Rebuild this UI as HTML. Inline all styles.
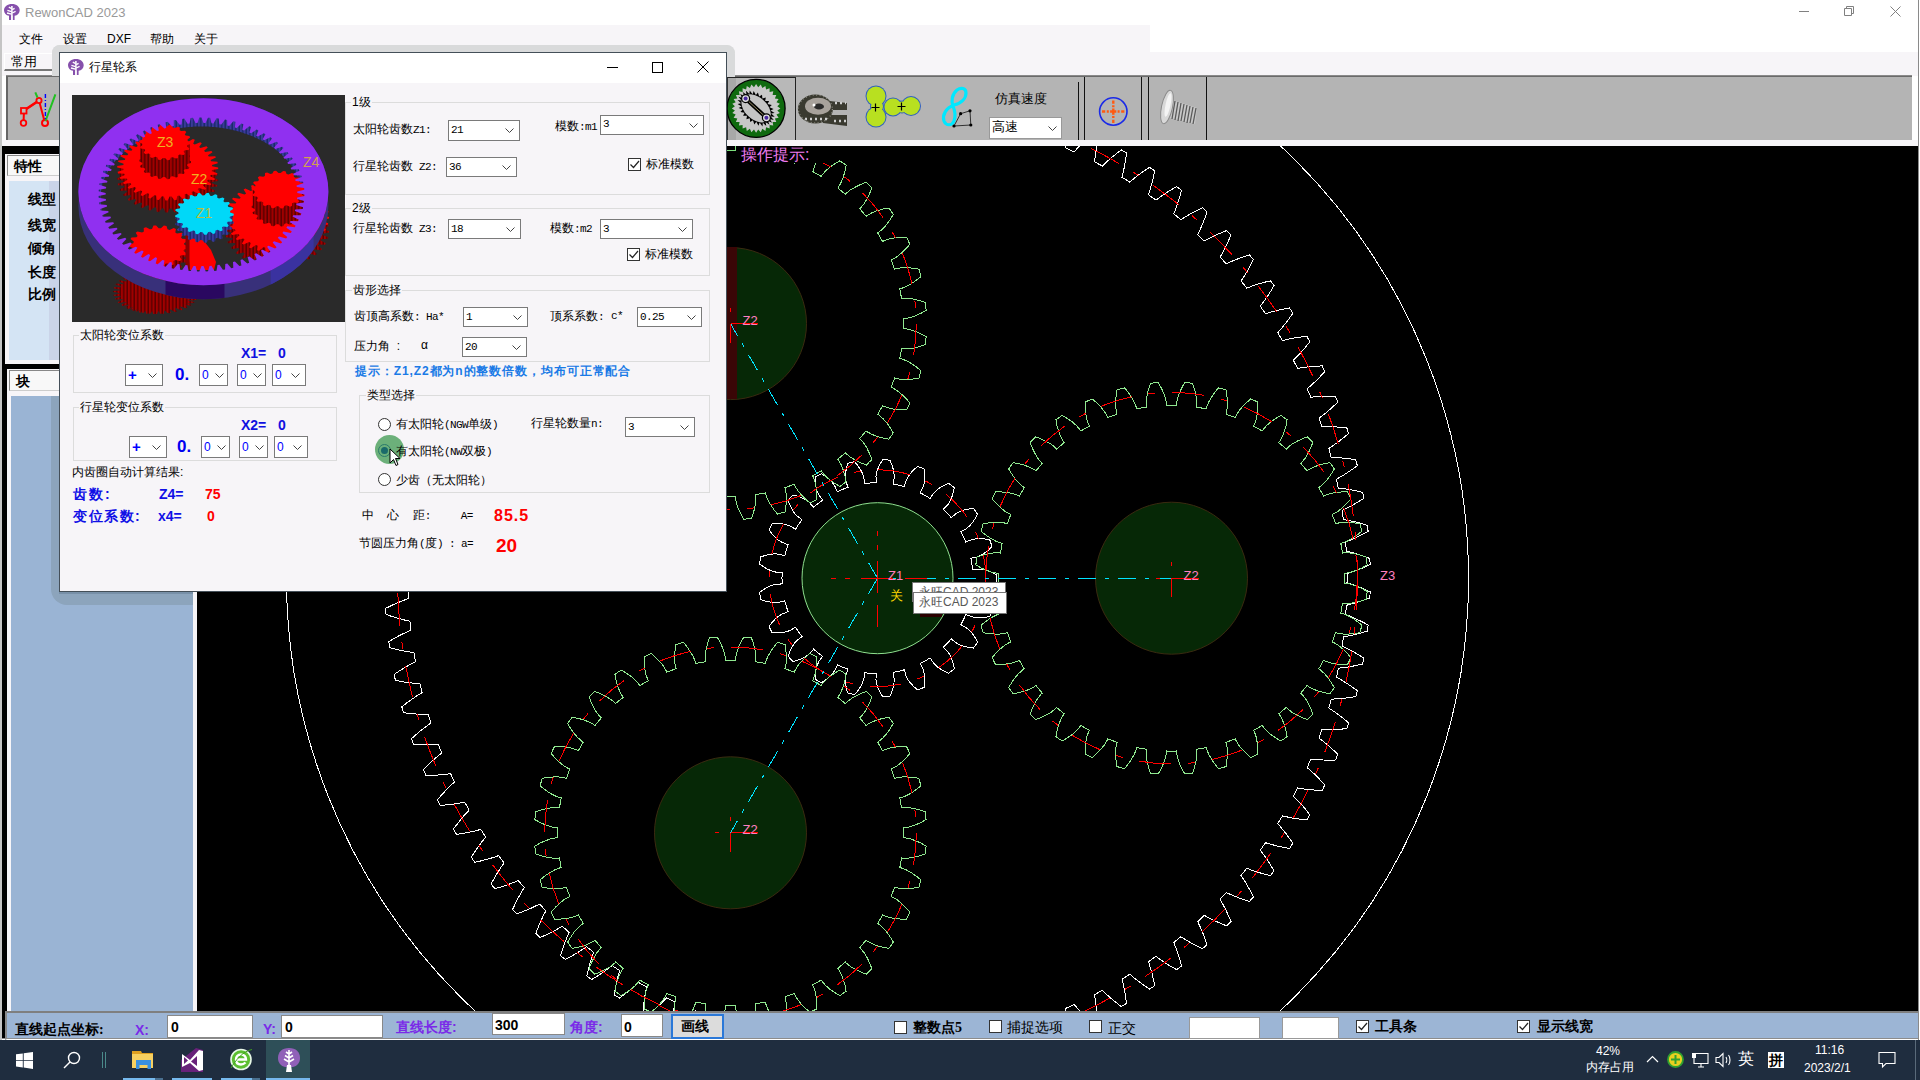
<!DOCTYPE html>
<html><head><meta charset="utf-8">
<style>
*{box-sizing:border-box;margin:0;padding:0}
html,body{width:1920px;height:1080px;overflow:hidden;background:#fff;font-family:"Liberation Sans",sans-serif;font-size:12px;color:#000}
.a{position:absolute;white-space:nowrap}
.t{position:absolute;white-space:nowrap;line-height:1}
.cb{position:absolute;background:#fff;border:1px solid #7a7a7a}
.cb .v{position:absolute;left:2px;top:2px;font-family:"Liberation Mono",monospace;font-size:11px;letter-spacing:-0.6px;line-height:14px}
.cb svg{position:absolute;right:5px;top:7px}
.chk{position:absolute;width:13px;height:13px;border:1px solid #333;background:#fff}
.grp{position:absolute;border:1px solid #dcdcdc}
.m{font-family:"Liberation Mono",monospace;font-size:11px;letter-spacing:-0.6px}
.lbl{position:absolute;background:#f7f5f8;padding:0 1px;line-height:14px;white-space:nowrap}
</style></head>
<body>
<!-- title bar -->
<div class="a" style="left:0;top:0;width:1920px;height:25px;background:#fff"></div>
<div class="a" style="left:0;top:0;width:2px;height:1040px;background:#c4c4c4"></div>
<div class="a" style="left:1918px;top:0;width:1px;height:1040px;background:#8a8a8a"></div>
<!-- MENUBAR -->
<div class="a" style="left:2px;top:25px;width:1148px;height:27px;background:#f7f5f8"></div>
<div class="a" style="left:2px;top:52px;width:1916px;height:24px;background:#f7f5f8"></div>
<svg class="a" style="left:4px;top:4px" width="16" height="17" viewBox="0 0 16 17"><path d="M8 0C12.5 0 15.7 2.6 15.7 6.2 15.7 9.3 13.5 11.2 10.6 11.8V16H8.6V11.5H7.4V16H5V11.8C2.2 11.2 0 9.3 0 6.2 0 2.6 3.5 0 8 0Z" fill="#8650ac"/><path d="M7.9 2V16" stroke="#fff" stroke-width="1.5"/><path d="M7.6 4.6L4.8 3.2M7.6 7.6L3.4 6.3M7.6 10.2L3 9M8.2 5.6L10.6 4.4M8.2 9L11.6 7.4" stroke="#fff" stroke-width="1.3"/></svg>
<div class="t" style="left:25px;top:6px;font-size:13px;color:#999">RewonCAD 2023</div>
<div class="a" style="left:1799px;top:11px;width:10px;height:1px;background:#808080"></div>
<svg class="a" style="left:1843px;top:5px" width="12" height="12"><path d="M1.5 3.5h7v7h-7z M3.5 3.5v-2h7v7h-2" stroke="#808080" fill="none"/></svg>
<svg class="a" style="left:1890px;top:6px" width="11" height="11"><path d="M0.5 0.5L10.5 10.5M10.5 0.5L0.5 10.5" stroke="#808080"/></svg>
<div class="t" style="left:19px;top:33px;font-size:12px">文件</div>
<div class="t" style="left:63px;top:33px;font-size:12px">设置</div>
<div class="t" style="left:107px;top:33px;font-size:12px">DXF</div>
<div class="t" style="left:150px;top:33px;font-size:12px">帮助</div>
<div class="t" style="left:194px;top:33px;font-size:12px">关于</div>
<!-- tab 常用 -->
<div class="a" style="left:4px;top:53px;width:54px;height:18px;background:#f7f5f8;border-left:1px solid #fff;border-top:1px solid #fff;border-right:2px solid #777;border-bottom:2px solid #777"></div>
<div class="t" style="left:11px;top:55px;font-size:13px">常用</div>
<!-- TOOLBAR -->
<div class="a" style="left:6px;top:75px;width:1906px;height:65px;background:#b4b4b4;border-top:2px solid #6a6a6a;border-left:2px solid #666"></div>
<div class="a" style="left:6px;top:75px;width:1906px;height:1px;background:#8a8a8a"></div>
<div class="a" style="left:2px;top:140px;width:1916px;height:6px;background:#f7f5f8"></div>
<svg class="a" style="left:16px;top:90px" width="42" height="40"><path d="M7.5 33L8 20.5L23 10.5L29 33" stroke="#f00" stroke-width="2" fill="none"/><path d="M8 20.5L23 10.5" stroke="#f00" stroke-width="2.6"/><rect x="5" y="18" width="5.5" height="5.5" fill="#bbb" stroke="#f00" stroke-width="1.8"/><circle cx="23" cy="10.5" r="2.6" fill="#bbb" stroke="#f00" stroke-width="1.8"/><circle cx="7.5" cy="33" r="2.8" fill="#bbb" stroke="#f00" stroke-width="1.8"/><circle cx="29" cy="33" r="3" fill="#bbb" stroke="#f00" stroke-width="2"/><path d="M21.5 7.5L19.3 2.4M29.5 31L39.4 4.3" stroke="#20c020" stroke-width="2"/><path d="M29.4 4V31" stroke="#00f" stroke-width="1.4" stroke-dasharray="4 2 1 2"/></svg>
<!-- toolbar right icons -->
<div class="a" style="left:727px;top:77px;width:69px;height:63px;border-left:1px solid #333;border-right:1px solid #222;border-top:1px solid #222;background:#b8b8b8"></div><div class="a" style="left:728px;top:78px;width:8px;height:62px;background:#a8a8a8"></div>
<svg class="a" style="left:725px;top:78px" width="62" height="62"><circle cx="31.1" cy="30.4" r="29" fill="#0f6a0f" stroke="#000" stroke-width="1.3"/><polygon points="55.4,30.4 52.3,32.5 54.9,35.1 51.5,36.6 53.6,39.7 49.9,40.4 51.3,43.9 47.6,43.9 48.3,47.6 44.6,46.9 44.6,50.6 41.1,49.2 40.4,52.9 37.3,50.8 35.8,54.2 33.2,51.6 31.1,54.7 29.0,51.6 26.4,54.2 24.9,50.8 21.8,52.9 21.1,49.2 17.6,50.6 17.6,46.9 13.9,47.6 14.6,43.9 10.9,43.9 12.3,40.4 8.6,39.7 10.7,36.6 7.3,35.1 9.9,32.5 6.8,30.4 9.9,28.3 7.3,25.7 10.7,24.2 8.6,21.1 12.3,20.4 10.9,16.9 14.6,16.9 13.9,13.2 17.6,13.9 17.6,10.2 21.1,11.6 21.8,7.9 24.9,10.0 26.4,6.6 29.0,9.2 31.1,6.1 33.2,9.2 35.8,6.6 37.3,10.0 40.4,7.9 41.1,11.6 44.6,10.2 44.6,13.9 48.3,13.2 47.6,16.9 51.3,16.9 49.9,20.4 53.6,21.1 51.5,24.2 54.9,25.7 52.3,28.3" fill="#c8c8c8"/><polygon points="47.1,44.8 42.9,42.8 44.5,46.8 40.6,44.1 41.3,48.0 37.8,44.7 37.5,48.4 34.6,44.6 33.5,47.8 31.3,43.8 29.3,46.4 28.0,42.3 25.2,44.1 24.8,40.3 21.4,41.2 22.0,37.7 18.1,37.7 19.6,34.7 15.4,33.9 17.7,31.6 13.6,29.9 16.6,28.4 12.6,25.9 16.1,25.2 12.5,22.1 16.5,22.4 13.4,18.8 17.5,19.9 15.1,16.0 19.3,18.0 17.7,14.0 21.6,16.7 20.9,12.8 24.4,16.1 24.7,12.4 27.6,16.2 28.7,13.0 30.9,17.0 32.9,14.4 34.2,18.5 37.0,16.7 37.4,20.5 40.8,19.6 40.2,23.1 44.1,23.1 42.6,26.1 46.8,26.9 44.5,29.2 48.6,30.9 45.6,32.4 49.6,34.9 46.1,35.6 49.7,38.7 45.7,38.4 48.8,42.0 44.7,40.9" fill="#000"/><ellipse cx="31.1" cy="30.4" rx="17" ry="11" transform="rotate(42 31.1 30.4)" fill="#c4c4c4"/><path d="M20.6 20.6L41.4 39.8" stroke="#000" stroke-width="4"/><path d="M21 21L41 39.4" stroke="#d8c890" stroke-width=".7"/><circle cx="20.6" cy="20.6" r="4" fill="#ddd" stroke="#000" stroke-width="1.2"/><circle cx="20.6" cy="20.6" r="2" fill="#4a2aa0"/><circle cx="41.4" cy="39.8" r="4" fill="#ddd" stroke="#000" stroke-width="1.2"/><circle cx="41.4" cy="39.8" r="2" fill="#4a2aa0"/></svg>
<svg class="a" style="left:797px;top:93px" width="52" height="36"><ellipse cx="18.4" cy="16" rx="17.5" ry="14.5" fill="#3a3a30"/><path d="M24 7L50 10V17L34 17L34 22L50 22V33L26 30Z" fill="#3a3a30"/><ellipse cx="21" cy="13.3" rx="13" ry="8.5" fill="#a8a29c"/><ellipse cx="22" cy="13.5" rx="5" ry="3" fill="#2a2a2a"/><circle cx="17" cy="12" r="1.5" fill="#fff"/><path d="M38 10h11M37 28h12M8 26h24" stroke="#cfcfcf" stroke-width="2.5" stroke-dasharray="2 3"/><ellipse cx="18.4" cy="16" rx="17" ry="14" fill="none" stroke="#8a8a80" stroke-width="1.3" stroke-dasharray="1 2.5"/></svg>
<svg class="a" style="left:860px;top:82px" width="66" height="50"><circle cx="16.0" cy="14.0" r="10.5" fill="#3060c0"/><circle cx="16.0" cy="35.0" r="10.5" fill="#3060c0"/><circle cx="17.0" cy="24.5" r="7.0" fill="#3060c0"/><circle cx="33.0" cy="25.0" r="9.5" fill="#3060c0"/><circle cx="51.0" cy="24.0" r="10.0" fill="#3060c0"/><circle cx="42.0" cy="25.0" r="6.5" fill="#3060c0"/><circle cx="16.0" cy="14.0" r="9.5" fill="#b8e020"/><circle cx="16.0" cy="35.0" r="9.5" fill="#b8e020"/><circle cx="17.0" cy="24.5" r="6.0" fill="#b8e020"/><circle cx="33.0" cy="25.0" r="8.5" fill="#b8e020"/><circle cx="51.0" cy="24.0" r="9.0" fill="#b8e020"/><circle cx="42.0" cy="25.0" r="5.5" fill="#b8e020"/><path d="M11.5 25.5h8M15.5 21.5v8M37.5 24.5h8M41.5 20.5v8" stroke="#000" stroke-width="1.2"/></svg>
<svg class="a" style="left:932px;top:84px" width="44" height="46"><path d="M22 21c-8 3-12 10-10 16 2 5 8 5 10 0 2-5 1-10-1-15-2-5-1-12 4-16 4-3 9-2 9 3 0 5-4 10-12 12z" fill="none" stroke="#00e8ff" stroke-width="3.2"/><path d="M22 42L28.6 29.7L38 26.8L38.8 41Z" fill="none" stroke="#222" stroke-width=".9"/><circle cx="22" cy="42" r="1.6"/><circle cx="28.6" cy="29.7" r="1.6"/><circle cx="38" cy="26.8" r="1.6"/><circle cx="38.8" cy="41" r="1.6"/></svg>
<div class="t" style="left:995px;top:92px;font-size:13px">仿真速度</div>
<div class="a" style="left:989px;top:117px;width:73px;height:22px;background:#fff;border:1px solid #999"></div>
<div class="t" style="left:992px;top:120px;font-size:13px">高速</div>
<svg class="a" style="left:1048px;top:126px" width="9" height="5"><path d="M0.5 0.5L4.5 4.5L8.5 0.5" stroke="#444" fill="none"/></svg>
<div class="a" style="left:1078px;top:82px;width:1px;height:58px;background:#111"></div>
<div class="a" style="left:1084px;top:77px;width:1px;height:63px;background:#111"></div>
<svg class="a" style="left:1098px;top:96px" width="30" height="32"><circle cx="15.3" cy="15.5" r="13.7" fill="none" stroke="#1a2ae8" stroke-width="1.6"/><path d="M15.3 4.5v22.5M4 15.5h22.5" stroke="#ff5a10" stroke-width="2.4" stroke-dasharray="3.2 1.6 2 1.3 6.2 1.3 2 1.6 3.2"/></svg>
<div class="a" style="left:1141px;top:77px;width:1px;height:63px;background:#111"></div>
<div class="a" style="left:1148px;top:77px;width:1px;height:63px;background:#111"></div>
<svg class="a" style="left:1156px;top:86px" width="44" height="42"><path d="M16 14L41 22L39 38L14 32Z" fill="#c8c8c8"/><path d="M19 15L16 33M22 16L19 34M25 17L22 35M28 18L25 35M31 19L28 36M34 20L31 37M37 21L34 37M40 22L37 38" stroke="#5a5a5a" stroke-width="1.3"/><ellipse cx="11" cy="21" rx="5.5" ry="17" transform="rotate(12 11 21)" fill="#d8d8d8" stroke="#8a8a8a" stroke-width="1"/><ellipse cx="12" cy="19" rx="2.5" ry="12" transform="rotate(12 12 19)" fill="#f4f4f4"/></svg>
<div class="a" style="left:1206px;top:77px;width:1px;height:63px;background:#111"></div>
<!-- LEFTPANEL -->
<div class="a" style="left:2px;top:146px;width:195px;height:865px;background:#000"></div>
<div class="a" style="left:5px;top:154px;width:192px;height:210px;background:#f7f5f8"></div>
<div class="a" style="left:7px;top:155px;width:52px;height:21px;background:#f8f8f8;border-left:1px solid #888;border-top:1px solid #888;border-bottom:1px solid #ccc"></div>
<div class="t" style="left:14px;top:160px;font-size:14px;font-weight:bold;font-family:'Liberation Serif',serif">特性</div>
<div class="a" style="left:9px;top:181px;width:184px;height:179px;background:#d4e4f4"></div>
<div class="a" style="left:49px;top:181px;width:10px;height:179px;background:#cad4e8"></div>
<div class="t" style="left:28px;top:193px;font-size:14px;font-weight:bold;font-family:'Liberation Serif',serif">线型</div>
<div class="t" style="left:28px;top:219px;font-size:14px;font-weight:bold;font-family:'Liberation Serif',serif">线宽</div>
<div class="t" style="left:28px;top:242px;font-size:14px;font-weight:bold;font-family:'Liberation Serif',serif">倾角</div>
<div class="t" style="left:28px;top:266px;font-size:14px;font-weight:bold;font-family:'Liberation Serif',serif">长度</div>
<div class="t" style="left:28px;top:288px;font-size:14px;font-weight:bold;font-family:'Liberation Serif',serif">比例</div>
<div class="a" style="left:7px;top:369px;width:190px;height:642px;background:#f7f5f8"></div>
<div class="a" style="left:9px;top:370px;width:50px;height:21px;background:#f8f8f8;border-left:1px solid #888;border-top:1px solid #888;border-bottom:1px solid #ccc"></div>
<div class="t" style="left:16px;top:375px;font-size:14px;font-weight:bold;font-family:'Liberation Serif',serif">块</div>
<div class="a" style="left:11px;top:396px;width:182px;height:615px;background:#9ab4d4"></div>
<div class="a" style="left:51px;top:396px;width:142px;height:209px;background:#8ca4bc;border-bottom-left-radius:16px"></div>
<div class="a" style="left:59px;top:591px;width:134px;height:3px;background:#7890a8"></div>
<!-- CANVAS -->
<div class="a" style="left:197px;top:146px;width:1721px;height:865px;background:#000;overflow:hidden">
<svg width="1721" height="865" style="position:absolute;left:0;top:0" font-family="Liberation Sans, sans-serif">
<circle cx="680.5" cy="432.2" r="591" fill="none" stroke="#fff" stroke-width="1" shape-rendering="crispEdges"/>
<circle cx="680.5" cy="432.2" r="75.5" fill="#062806" stroke="#8ee08e" stroke-width="1"/>
<circle cx="974.5" cy="432.2" r="76" fill="#062806" stroke="#3a2a10" stroke-width="1"/>
<circle cx="533.5" cy="177.6" r="76" fill="#062806" stroke="#3a2a10" stroke-width="1"/>
<circle cx="533.5" cy="686.8" r="76" fill="#062806" stroke="#3a2a10" stroke-width="1"/>
<rect x="530.0" y="101.0" width="10" height="152" fill="#3a0606"/>
<path d="M1150.1,432.2 L1150.0,427.6 L1150.0,427.6 L1155.8,425.7 L1161.6,423.6 L1167.4,421.2 L1173.1,418.6 L1173.0,415.6 L1172.9,412.5 L1167.0,410.3 L1161.1,408.3 L1155.2,406.6 L1149.3,405.1 L1149.3,405.1 L1149.0,400.5 L1148.7,395.9 L1148.7,395.9 L1154.3,393.7 L1159.9,391.1 L1165.5,388.4 L1171.1,385.4 L1170.8,382.3 L1170.4,379.3 L1164.4,377.5 L1158.4,375.9 L1152.4,374.6 L1146.4,373.5 L1146.4,373.5 L1145.8,368.9 L1145.1,364.4 L1145.1,364.4 L1150.6,361.8 L1156.0,358.9 L1161.4,355.7 L1166.8,352.4 L1166.3,349.4 L1165.7,346.4 L1159.6,345.0 L1153.5,343.8 L1147.4,342.8 L1141.3,342.2 L1141.3,342.2 L1140.4,337.7 L1139.5,333.2 L1139.5,333.2 L1144.8,330.2 L1150.0,326.9 L1155.2,323.4 L1160.3,319.7 L1159.6,316.8 L1158.8,313.8 L1152.6,312.8 L1146.4,312.1 L1140.3,311.5 L1134.2,311.3 L1134.2,311.3 L1133.0,306.8 L1131.8,302.4 L1131.8,302.4 L1136.8,299.1 L1141.8,295.5 L1146.7,291.6 L1151.6,287.6 L1150.7,284.7 L1149.8,281.8 L1143.5,281.2 L1137.3,280.9 L1131.1,280.8 L1125.0,280.9 L1125.0,280.9 L1123.5,276.6 L1122.0,272.3 L1122.0,272.3 L1126.8,268.6 L1131.6,264.6 L1136.2,260.5 L1140.7,256.1 L1139.6,253.3 L1138.5,250.4 L1132.2,250.3 L1126.0,250.4 L1119.8,250.7 L1113.8,251.2 L1113.8,251.2 L1112.0,247.0 L1110.2,242.8 L1110.2,242.8 L1114.8,238.8 L1119.2,234.6 L1123.6,230.1 L1127.8,225.5 L1126.5,222.7 L1125.2,219.9 L1118.9,220.2 L1112.7,220.7 L1106.6,221.4 L1100.6,222.4 L1100.6,222.4 L1098.5,218.3 L1096.4,214.3 L1096.4,214.3 L1100.7,209.9 L1104.9,205.4 L1108.9,200.7 L1112.8,195.7 L1111.4,193.1 L1109.9,190.4 L1103.6,191.1 L1097.4,192.0 L1091.4,193.2 L1085.5,194.5 L1085.5,194.5 L1083.1,190.6 L1080.8,186.7 L1080.8,186.7 L1084.7,182.1 L1088.6,177.3 L1092.3,172.3 L1095.9,167.1 L1094.2,164.5 L1092.6,162.0 L1086.4,163.1 L1080.3,164.4 L1074.3,166.0 L1068.5,167.7 L1068.5,167.7 L1065.9,164.0 L1063.3,160.2 L1063.3,160.2 L1066.9,155.4 L1070.4,150.3 L1073.8,145.1 L1077.0,139.6 L1075.2,137.2 L1073.4,134.8 L1067.3,136.3 L1061.3,138.0 L1055.4,140.0 L1049.8,142.1 L1049.8,142.1 L1046.9,138.5 L1044.0,135.0 L1044.0,135.0 L1047.4,129.9 L1050.5,124.6 L1053.5,119.2 L1056.4,113.5 L1054.4,111.2 L1052.4,108.9 L1046.4,110.9 L1040.6,113.0 L1034.9,115.3 L1029.3,117.9 L1029.3,117.9 L1026.2,114.5 L1023.1,111.1 L1023.1,111.1 L1026.1,105.8 L1028.9,100.3 L1031.5,94.7 L1034.0,88.9 L1031.9,86.7 L1029.7,84.5 L1023.9,86.9 L1018.2,89.4 L1012.7,92.1 L1007.3,95.0 L1007.3,95.0 L1004.0,91.9 L1000.7,88.7 L1000.7,88.7 L1003.3,83.2 L1005.7,77.6 L1008.0,71.8 L1010.0,65.8 L1007.8,63.8 L1005.5,61.8 L999.8,64.5 L994.3,67.4 L988.9,70.5 L983.8,73.7 L983.8,73.7 L980.3,70.8 L976.8,67.9 L976.8,67.9 L979.0,62.2 L981.0,56.4 L982.9,50.5 L984.5,44.4 L982.1,42.5 L979.7,40.7 L974.2,43.8 L968.9,47.1 L963.8,50.5 L958.9,54.1 L958.9,54.1 L955.2,51.4 L951.5,48.7 L951.5,48.7 L953.3,42.9 L955.0,37.0 L956.4,30.9 L957.7,24.8 L955.1,23.0 L952.6,21.4 L947.3,24.8 L942.3,28.5 L937.4,32.2 L932.8,36.2 L932.8,36.2 L928.9,33.7 L925.0,31.3 L925.0,31.3 L926.4,25.4 L927.7,19.4 L928.7,13.2 L929.5,7.0 L926.9,5.4 L924.2,3.9 L919.2,7.8 L914.4,11.7 L909.8,15.8 L905.4,20.0 L905.4,20.0 L901.4,17.9 L897.4,15.7 L897.4,15.7 L898.4,9.7 L899.2,3.6 L899.9,-2.6 L900.3,-8.9 L897.5,-10.2 L894.8,-11.6 L890.0,-7.4 L885.5,-3.1 L881.2,1.3 L877.1,5.8 L877.1,5.8 L872.9,3.9 L868.7,2.0 L868.7,2.0 L869.4,-4.0 L869.8,-10.2 L870.0,-16.4 L870.0,-22.7 L867.2,-23.9 L864.3,-25.0 L859.9,-20.5 L855.7,-16.0 L851.6,-11.3 L847.9,-6.5 L847.9,-6.5 L843.6,-8.1 L839.3,-9.7 L839.3,-9.7 L839.5,-15.8 L839.5,-21.9 L839.3,-28.2 L838.8,-34.5 L835.9,-35.4 L833.0,-36.4 L828.9,-31.6 L825.0,-26.8 L821.3,-21.8 L817.9,-16.8 L817.9,-16.8 L813.5,-18.1 L809.1,-19.4 L809.1,-19.4 L808.9,-25.5 L808.5,-31.6 L807.8,-37.8 L807.0,-44.1 L804.0,-44.8 L801.1,-45.6 L797.3,-40.6 L793.7,-35.5 L790.3,-30.3 L787.2,-25.1 L787.2,-25.1 L782.8,-26.1 L778.3,-27.1 L778.3,-27.1 L777.7,-33.1 L776.9,-39.2 L775.8,-45.4 L774.5,-51.5 L771.5,-52.1 L768.5,-52.7 L765.1,-47.4 L761.9,-42.0 L758.9,-36.7 L756.1,-31.2 L756.1,-31.2 L751.6,-31.9 L747.1,-32.6 L747.1,-32.6 L746.1,-38.6 L744.8,-44.6 L743.4,-50.7 L741.7,-56.8 L738.6,-57.1 L735.6,-57.5 L732.5,-52.0 L729.7,-46.5 L727.0,-40.9 L724.7,-35.3 L724.7,-35.3 L720.1,-35.7 L715.5,-36.1 L715.5,-36.1 L714.2,-42.0 L712.5,-47.9 L710.6,-53.8 L708.5,-59.8 L705.5,-59.9 L702.4,-60.1 L699.7,-54.4 L697.2,-48.7 L695.0,-42.9 L693.0,-37.2 L693.0,-37.2 L688.4,-37.3 L683.9,-37.3 L683.9,-37.3 L682.1,-43.2 L680.0,-49.0 L677.7,-54.8 L675.2,-60.6 L672.2,-60.5 L669.1,-60.4 L666.8,-54.6 L664.7,-48.7 L662.9,-42.8 L661.3,-37.0 L661.3,-37.0 L656.7,-36.8 L652.1,-36.5 L652.1,-36.5 L650.0,-42.2 L647.5,-47.8 L644.9,-53.5 L642.0,-59.1 L638.9,-58.8 L635.9,-58.6 L634.0,-52.5 L632.3,-46.5 L630.8,-40.6 L629.7,-34.6 L629.7,-34.6 L625.1,-34.1 L620.6,-33.5 L620.6,-33.5 L618.0,-39.0 L615.2,-44.5 L612.2,-50.0 L608.9,-55.4 L605.9,-54.9 L602.9,-54.4 L601.4,-48.3 L600.1,-42.2 L599.0,-36.1 L598.3,-30.1 L598.3,-30.1 L593.8,-29.3 L589.3,-28.4 L589.3,-28.4 L586.3,-33.7 L583.2,-39.0 L579.8,-44.2 L576.1,-49.4 L573.2,-48.7 L570.2,-48.1 L569.1,-41.9 L568.2,-35.7 L567.6,-29.6 L567.2,-23.5 L567.2,-23.5 L562.8,-22.4 L558.4,-21.2 L558.4,-21.2 L555.1,-26.3 L551.6,-31.4 L547.8,-36.4 L543.9,-41.3 L540.9,-40.4 L538.0,-39.5 L537.4,-33.3 L536.9,-27.0 L536.7,-20.9 L536.7,-14.8 L536.7,-14.8 L532.4,-13.4 L528.0,-11.9 L528.0,-11.9 L524.4,-16.8 L520.6,-21.6 L516.5,-26.3 L512.2,-31.0 L509.4,-29.9 L506.5,-28.8 L506.3,-22.5 L506.2,-16.3 L506.4,-10.2 L506.9,-4.1 L506.9,-4.1 L502.6,-2.4 L498.4,-0.6 L498.4,-0.6 L494.5,-5.3 L490.3,-9.8 L485.9,-14.2 L481.3,-18.5 L478.5,-17.3 L475.8,-16.0 L476.0,-9.7 L476.4,-3.5 L477.0,2.6 L477.8,8.6 L477.8,8.6 L473.7,10.6 L469.6,12.7 L469.6,12.7 L465.4,8.3 L460.9,4.1 L456.2,-0.1 L451.4,-4.1 L448.7,-2.6 L446.0,-1.2 L446.6,5.1 L447.4,11.3 L448.4,17.3 L449.7,23.3 L449.7,23.3 L445.7,25.5 L441.8,27.9 L441.8,27.9 L437.2,23.8 L432.5,19.9 L427.6,16.1 L422.4,12.4 L419.8,14.0 L417.3,15.6 L418.3,21.8 L419.5,28.0 L421.0,33.9 L422.6,39.8 L422.6,39.8 L418.8,42.3 L415.0,44.9 L415.0,44.9 L410.2,41.1 L405.2,37.5 L400.0,34.1 L394.7,30.8 L392.2,32.6 L389.7,34.4 L391.2,40.5 L392.8,46.5 L394.7,52.4 L396.7,58.1 L396.7,58.1 L393.1,60.9 L389.5,63.7 L389.5,63.7 L384.4,60.3 L379.2,57.0 L373.8,53.9 L368.2,51.0 L365.9,52.9 L363.5,54.9 L365.4,60.9 L367.4,66.8 L369.7,72.5 L372.1,78.1 L372.1,78.1 L368.7,81.1 L365.3,84.2 L365.3,84.2 L360.0,81.1 L354.6,78.2 L349.0,75.5 L343.2,72.9 L341.0,75.0 L338.8,77.1 L341.1,83.0 L343.5,88.8 L346.1,94.3 L348.9,99.7 L348.9,99.7 L345.7,103.0 L342.5,106.3 L342.5,106.3 L337.0,103.6 L331.4,101.0 L325.6,98.7 L319.7,96.5 L317.7,98.8 L315.6,101.0 L318.3,106.7 L321.1,112.3 L324.1,117.7 L327.2,122.9 L327.2,122.9 L324.2,126.3 L321.3,129.8 L321.3,129.8 L315.6,127.5 L309.9,125.4 L303.9,123.4 L297.9,121.7 L296.0,124.0 L294.1,126.4 L297.1,131.9 L300.3,137.3 L303.6,142.5 L307.1,147.4 L307.1,147.4 L304.4,151.1 L301.7,154.8 L301.7,154.8 L295.9,152.8 L290.0,151.1 L284.0,149.5 L277.8,148.2 L276.0,150.7 L274.3,153.2 L277.7,158.5 L281.3,163.6 L284.9,168.6 L288.8,173.3 L288.8,173.3 L286.3,177.1 L283.8,181.0 L283.8,181.0 L277.9,179.4 L271.9,178.1 L265.8,177.0 L259.5,176.0 L258.0,178.6 L256.4,181.3 L260.2,186.3 L264.0,191.2 L268.0,195.9 L272.2,200.3 L272.2,200.3 L269.9,204.3 L267.7,208.3 L267.7,208.3 L261.8,207.2 L255.7,206.2 L249.5,205.5 L243.2,205.0 L241.8,207.7 L240.4,210.5 L244.5,215.3 L248.7,219.9 L253.0,224.3 L257.5,228.4 L257.5,228.4 L255.5,232.6 L253.6,236.7 L253.6,236.7 L247.5,236.0 L241.4,235.4 L235.2,235.1 L228.9,235.1 L227.7,237.9 L226.5,240.7 L230.9,245.2 L235.4,249.5 L240.0,253.6 L244.7,257.4 L244.7,257.4 L243.0,261.7 L241.3,266.0 L241.3,266.0 L235.3,265.6 L229.1,265.5 L222.9,265.7 L216.6,266.0 L215.6,268.9 L214.6,271.8 L219.3,276.0 L224.0,280.0 L228.9,283.7 L233.9,287.3 L233.9,287.3 L232.5,291.6 L231.1,296.0 L231.1,296.0 L225.0,296.1 L218.9,296.4 L212.7,296.9 L206.4,297.7 L205.6,300.6 L204.8,303.6 L209.8,307.5 L214.8,311.1 L219.9,314.6 L225.1,317.8 L225.1,317.8 L224.0,322.2 L223.0,326.7 L223.0,326.7 L216.9,327.1 L210.8,327.9 L204.6,328.8 L198.4,330.0 L197.8,333.0 L197.2,336.0 L202.4,339.5 L207.7,342.8 L213.0,345.9 L218.4,348.8 L218.4,348.8 L217.6,353.3 L216.9,357.8 L216.9,357.8 L210.9,358.7 L204.8,359.8 L198.7,361.2 L192.6,362.8 L192.2,365.8 L191.8,368.8 L197.3,372.0 L202.7,375.0 L208.3,377.7 L213.8,380.1 L213.8,380.1 L213.3,384.7 L212.9,389.3 L212.9,389.3 L207.0,390.5 L201.0,392.1 L195.0,393.9 L189.1,395.9 L188.8,398.9 L188.6,402.0 L194.3,404.8 L200.0,407.4 L205.7,409.7 L211.4,411.8 L211.4,411.8 L211.2,416.3 L211.1,420.9 L211.1,420.9 L205.2,422.6 L199.4,424.5 L193.6,426.7 L187.7,429.1 L187.7,432.2 L187.7,435.3 L193.6,437.7 L199.4,439.9 L205.2,441.8 L211.1,443.5 L211.1,443.5 L211.2,448.1 L211.4,452.6 L211.4,452.6 L205.7,454.7 L200.0,457.0 L194.3,459.6 L188.6,462.4 L188.8,465.5 L189.1,468.5 L195.0,470.5 L201.0,472.3 L207.0,473.9 L212.9,475.1 L212.9,475.1 L213.3,479.7 L213.8,484.3 L213.8,484.3 L208.3,486.7 L202.7,489.4 L197.3,492.4 L191.8,495.6 L192.2,498.6 L192.6,501.6 L198.7,503.2 L204.8,504.6 L210.9,505.7 L216.9,506.6 L216.9,506.6 L217.6,511.1 L218.4,515.6 L218.4,515.6 L213.0,518.5 L207.7,521.6 L202.4,524.9 L197.2,528.4 L197.8,531.4 L198.4,534.4 L204.6,535.6 L210.8,536.5 L216.9,537.3 L223.0,537.7 L223.0,537.7 L224.0,542.2 L225.1,546.6 L225.1,546.6 L219.9,549.8 L214.8,553.3 L209.8,556.9 L204.8,560.8 L205.6,563.8 L206.4,566.7 L212.7,567.5 L218.9,568.0 L225.0,568.3 L231.1,568.4 L231.1,568.4 L232.5,572.8 L233.9,577.1 L233.9,577.1 L228.9,580.7 L224.0,584.4 L219.3,588.4 L214.6,592.6 L215.6,595.5 L216.6,598.4 L222.9,598.7 L229.1,598.9 L235.3,598.8 L241.3,598.4 L241.3,598.4 L243.0,602.7 L244.7,607.0 L244.7,607.0 L240.0,610.8 L235.4,614.9 L230.9,619.2 L226.5,623.7 L227.7,626.5 L228.9,629.3 L235.2,629.3 L241.4,629.0 L247.5,628.4 L253.6,627.7 L253.6,627.7 L255.5,631.8 L257.5,636.0 L257.5,636.0 L253.0,640.1 L248.7,644.5 L244.5,649.1 L240.4,653.9 L241.8,656.7 L243.2,659.4 L249.5,658.9 L255.7,658.2 L261.8,657.2 L267.7,656.1 L267.7,656.1 L269.9,660.1 L272.2,664.1 L272.2,664.1 L268.0,668.5 L264.0,673.2 L260.2,678.1 L256.4,683.1 L258.0,685.8 L259.5,688.4 L265.8,687.4 L271.9,686.3 L277.9,685.0 L283.8,683.4 L283.8,683.4 L286.3,687.3 L288.8,691.1 L288.8,691.1 L284.9,695.8 L281.3,700.8 L277.7,705.9 L274.3,711.2 L276.0,713.7 L277.8,716.2 L284.0,714.9 L290.0,713.3 L295.9,711.6 L301.7,709.6 L301.7,709.6 L304.4,713.3 L307.1,717.0 L307.1,717.0 L303.6,721.9 L300.3,727.1 L297.1,732.5 L294.1,738.0 L296.0,740.4 L297.9,742.7 L303.9,741.0 L309.9,739.0 L315.6,736.9 L321.3,734.6 L321.3,734.6 L324.2,738.1 L327.2,741.5 L327.2,741.5 L324.1,746.7 L321.1,752.1 L318.3,757.7 L315.6,763.4 L317.7,765.6 L319.7,767.9 L325.6,765.7 L331.4,763.4 L337.0,760.8 L342.5,758.1 L342.5,758.1 L345.7,761.4 L348.9,764.7 L348.9,764.7 L346.1,770.1 L343.5,775.6 L341.1,781.4 L338.8,787.3 L341.0,789.4 L343.2,791.5 L349.0,788.9 L354.6,786.2 L360.0,783.3 L365.3,780.2 L365.3,780.2 L368.7,783.3 L372.1,786.3 L372.1,786.3 L369.7,791.9 L367.4,797.6 L365.4,803.5 L363.5,809.5 L365.9,811.5 L368.2,813.4 L373.8,810.5 L379.2,807.4 L384.4,804.1 L389.5,800.7 L389.5,800.7 L393.1,803.5 L396.7,806.3 L396.7,806.3 L394.7,812.0 L392.8,817.9 L391.2,823.9 L389.7,830.0 L392.2,831.8 L394.7,833.6 L400.0,830.3 L405.2,826.9 L410.2,823.3 L415.0,819.5 L415.0,819.5 L418.8,822.1 L422.6,824.6 L422.6,824.6 L421.0,830.5 L419.5,836.4 L418.3,842.6 L417.3,848.8 L419.8,850.4 L422.4,852.0 L427.6,848.3 L432.5,844.5 L437.2,840.6 L441.8,836.5 L441.8,836.5 L445.7,838.9 L449.7,841.1 L449.7,841.1 L448.4,847.1 L447.4,853.1 L446.6,859.3 L446.0,865.6 L448.7,867.0 L451.4,868.5 L456.2,864.5 L460.9,860.3 L465.4,856.1 L469.6,851.7 L469.6,851.7 L473.7,853.8 L477.8,855.8 L477.8,855.8 L477.0,861.8 L476.4,867.9 L476.0,874.1 L475.8,880.4 L478.5,881.7 L481.3,882.9 L485.9,878.6 L490.3,874.2 L494.5,869.7 L498.4,865.0 L498.4,865.0 L502.6,866.8 L506.9,868.5 L506.9,868.5 L506.4,874.6 L506.2,880.7 L506.3,886.9 L506.5,893.2 L509.4,894.3 L512.2,895.4 L516.5,890.7 L520.6,886.0 L524.4,881.2 L528.0,876.3 L528.0,876.3 L532.4,877.8 L536.7,879.2 L536.7,879.2 L536.7,885.3 L536.9,891.4 L537.4,897.7 L538.0,903.9 L540.9,904.8 L543.9,905.7 L547.8,900.8 L551.6,895.8 L555.1,890.7 L558.4,885.6 L558.4,885.6 L562.8,886.8 L567.2,887.9 L567.2,887.9 L567.6,894.0 L568.2,900.1 L569.1,906.3 L570.2,912.5 L573.2,913.1 L576.1,913.8 L579.8,908.6 L583.2,903.4 L586.3,898.1 L589.3,892.8 L589.3,892.8 L593.8,893.7 L598.3,894.5 L598.3,894.5 L599.0,900.5 L600.1,906.6 L601.4,912.7 L602.9,918.8 L605.9,919.3 L608.9,919.8 L612.2,914.4 L615.2,908.9 L618.0,903.4 L620.6,897.9 L620.6,897.9 L625.1,898.5 L629.7,899.0 L629.7,899.0 L630.8,905.0 L632.3,910.9 L634.0,916.9 L635.9,923.0 L638.9,923.2 L642.0,923.5 L644.9,917.9 L647.5,912.2 L650.0,906.6 L652.1,900.9 L652.1,900.9 L656.7,901.2 L661.3,901.4 L661.3,901.4 L662.9,907.2 L664.7,913.1 L666.8,919.0 L669.1,924.8 L672.2,924.9 L675.2,925.0 L677.7,919.2 L680.0,913.4 L682.1,907.6 L683.9,901.7 L683.9,901.7 L688.4,901.7 L693.0,901.6 L693.0,901.6 L695.0,907.3 L697.2,913.1 L699.7,918.8 L702.4,924.5 L705.5,924.3 L708.5,924.2 L710.6,918.2 L712.5,912.3 L714.2,906.4 L715.5,900.5 L715.5,900.5 L720.1,900.1 L724.7,899.7 L724.7,899.7 L727.0,905.3 L729.7,910.9 L732.5,916.4 L735.6,921.9 L738.6,921.5 L741.7,921.2 L743.4,915.1 L744.8,909.0 L746.1,903.0 L747.1,897.0 L747.1,897.0 L751.6,896.3 L756.1,895.6 L756.1,895.6 L758.9,901.1 L761.9,906.4 L765.1,911.8 L768.5,917.1 L771.5,916.5 L774.5,915.9 L775.8,909.8 L776.9,903.6 L777.7,897.5 L778.3,891.5 L778.3,891.5 L782.8,890.5 L787.2,889.5 L787.2,889.5 L790.3,894.7 L793.7,899.9 L797.3,905.0 L801.1,910.0 L804.0,909.2 L807.0,908.5 L807.8,902.2 L808.5,896.0 L808.9,889.9 L809.1,883.8 L809.1,883.8 L813.5,882.5 L817.9,881.2 L817.9,881.2 L821.3,886.2 L825.0,891.2 L828.9,896.0 L833.0,900.8 L835.9,899.8 L838.8,898.9 L839.3,892.6 L839.5,886.3 L839.5,880.2 L839.3,874.1 L839.3,874.1 L843.6,872.5 L847.9,870.9 L847.9,870.9 L851.6,875.7 L855.7,880.4 L859.9,884.9 L864.3,889.4 L867.2,888.3 L870.0,887.1 L870.0,880.8 L869.8,874.6 L869.4,868.4 L868.7,862.4 L868.7,862.4 L872.9,860.5 L877.1,858.6 L877.1,858.6 L881.2,863.1 L885.5,867.5 L890.0,871.8 L894.8,876.0 L897.5,874.6 L900.3,873.3 L899.9,867.0 L899.2,860.8 L898.4,854.7 L897.4,848.7 L897.4,848.7 L901.4,846.5 L905.4,844.4 L905.4,844.4 L909.8,848.6 L914.4,852.7 L919.2,856.6 L924.2,860.5 L926.9,859.0 L929.5,857.4 L928.7,851.2 L927.7,845.0 L926.4,839.0 L925.0,833.1 L925.0,833.1 L928.9,830.7 L932.8,828.2 L932.8,828.2 L937.4,832.2 L942.3,835.9 L947.3,839.6 L952.6,843.0 L955.1,841.4 L957.7,839.6 L956.4,833.5 L955.0,827.4 L953.3,821.5 L951.5,815.7 L951.5,815.7 L955.2,813.0 L958.9,810.3 L958.9,810.3 L963.8,813.9 L968.9,817.3 L974.2,820.6 L979.7,823.7 L982.1,821.9 L984.5,820.0 L982.9,813.9 L981.0,808.0 L979.0,802.2 L976.8,796.5 L976.8,796.5 L980.3,793.6 L983.8,790.7 L983.8,790.7 L988.9,793.9 L994.3,797.0 L999.8,799.9 L1005.5,802.6 L1007.8,800.6 L1010.0,798.6 L1008.0,792.6 L1005.7,786.8 L1003.3,781.2 L1000.7,775.7 L1000.7,775.7 L1004.0,772.5 L1007.3,769.4 L1007.3,769.4 L1012.7,772.3 L1018.2,775.0 L1023.9,777.5 L1029.7,779.9 L1031.9,777.7 L1034.0,775.5 L1031.5,769.7 L1028.9,764.1 L1026.1,758.6 L1023.1,753.3 L1023.1,753.3 L1026.2,749.9 L1029.3,746.5 L1029.3,746.5 L1034.9,749.1 L1040.6,751.4 L1046.4,753.5 L1052.4,755.5 L1054.4,753.2 L1056.4,750.9 L1053.5,745.2 L1050.5,739.8 L1047.4,734.5 L1044.0,729.4 L1044.0,729.4 L1046.9,725.9 L1049.8,722.3 L1049.8,722.3 L1055.4,724.4 L1061.3,726.4 L1067.3,728.1 L1073.4,729.6 L1075.2,727.2 L1077.0,724.8 L1073.8,719.3 L1070.4,714.1 L1066.9,709.0 L1063.3,704.2 L1063.3,704.2 L1065.9,700.4 L1068.5,696.7 L1068.5,696.7 L1074.3,698.4 L1080.3,700.0 L1086.4,701.3 L1092.6,702.4 L1094.2,699.9 L1095.9,697.3 L1092.3,692.1 L1088.6,687.1 L1084.7,682.3 L1080.8,677.7 L1080.8,677.7 L1083.1,673.8 L1085.5,669.9 L1085.5,669.9 L1091.4,671.2 L1097.4,672.4 L1103.6,673.3 L1109.9,674.0 L1111.4,671.3 L1112.8,668.7 L1108.9,663.7 L1104.9,659.0 L1100.7,654.5 L1096.4,650.1 L1096.4,650.1 L1098.5,646.1 L1100.6,642.0 L1100.6,642.0 L1106.6,643.0 L1112.7,643.7 L1118.9,644.2 L1125.2,644.5 L1126.5,641.7 L1127.8,638.9 L1123.6,634.3 L1119.2,629.8 L1114.8,625.6 L1110.2,621.6 L1110.2,621.6 L1112.0,617.4 L1113.8,613.2 L1113.8,613.2 L1119.8,613.7 L1126.0,614.0 L1132.2,614.1 L1138.5,614.0 L1139.6,611.1 L1140.7,608.3 L1136.2,603.9 L1131.6,599.8 L1126.8,595.8 L1122.0,592.1 L1122.0,592.1 L1123.5,587.8 L1125.0,583.5 L1125.0,583.5 L1131.1,583.6 L1137.3,583.5 L1143.5,583.2 L1149.8,582.6 L1150.7,579.7 L1151.6,576.8 L1146.7,572.8 L1141.8,568.9 L1136.8,565.3 L1131.8,562.0 L1131.8,562.0 L1133.0,557.6 L1134.2,553.1 L1134.2,553.1 L1140.3,552.9 L1146.4,552.3 L1152.6,551.6 L1158.8,550.6 L1159.6,547.6 L1160.3,544.7 L1155.2,541.0 L1150.0,537.5 L1144.8,534.2 L1139.5,531.2 L1139.5,531.2 L1140.4,526.7 L1141.3,522.2 L1141.3,522.2 L1147.4,521.6 L1153.5,520.6 L1159.6,519.4 L1165.7,518.0 L1166.3,515.0 L1166.8,512.0 L1161.4,508.7 L1156.0,505.5 L1150.6,502.6 L1145.1,500.0 L1145.1,500.0 L1145.8,495.5 L1146.4,490.9 L1146.4,490.9 L1152.4,489.8 L1158.4,488.5 L1164.4,486.9 L1170.4,485.1 L1170.8,482.1 L1171.1,479.0 L1165.5,476.0 L1159.9,473.3 L1154.3,470.7 L1148.7,468.5 L1148.7,468.5 L1149.0,463.9 L1149.3,459.3 L1149.3,459.3 L1155.2,457.8 L1161.1,456.1 L1167.0,454.1 L1172.9,451.9 L1173.0,448.8 L1173.1,445.8 L1167.4,443.2 L1161.6,440.8 L1155.8,438.7 L1150.0,436.8 L1150.0,436.8Z" fill="none" stroke="#fff" stroke-width="1" shape-rendering="crispEdges"/>
<path d="M774.9,446.4 L775.6,440.8 L781.9,441.3 L786.2,440.9 L790.5,439.7 L794.8,438.0 L799.1,435.8 L799.2,432.2 L799.1,428.6 L794.8,426.4 L790.5,424.7 L786.2,423.5 L781.9,423.1 L775.6,423.6 L774.9,418.0 L773.9,412.3 L780.1,411.0 L784.0,409.3 L787.8,406.9 L791.4,404.0 L794.9,400.7 L793.9,397.2 L792.8,393.8 L788.0,393.0 L783.4,392.6 L778.9,392.8 L774.7,393.6 L768.8,396.0 L766.5,390.8 L763.9,385.7 L769.4,382.6 L772.7,379.8 L775.6,376.4 L778.2,372.6 L780.5,368.4 L778.6,365.3 L776.5,362.4 L771.7,363.0 L767.2,364.0 L762.9,365.5 L759.2,367.5 L754.2,371.6 L750.5,367.3 L746.5,363.2 L750.9,358.6 L753.2,355.0 L754.9,350.9 L756.3,346.4 L757.3,341.7 L754.5,339.4 L751.6,337.2 L747.3,339.2 L743.2,341.5 L739.6,344.2 L736.6,347.2 L733.1,352.5 L728.2,349.5 L723.2,346.8 L726.0,341.1 L727.2,337.0 L727.7,332.5 L727.7,327.9 L727.2,323.1 L723.9,321.7 L720.5,320.5 L716.9,323.7 L713.7,327.1 L711.0,330.7 L709.1,334.5 L707.3,340.6 L701.7,339.1 L696.1,338.0 L697.2,331.7 L697.0,327.5 L696.2,323.1 L694.8,318.6 L693.0,314.2 L689.4,313.9 L685.8,313.6 L683.3,317.8 L681.2,321.9 L679.7,326.2 L679.0,330.4 L679.1,336.8 L673.4,337.0 L667.7,337.6 L666.8,331.3 L665.4,327.2 L663.3,323.3 L660.7,319.5 L657.6,315.7 L654.1,316.5 L650.6,317.4 L649.4,322.0 L648.7,326.6 L648.5,331.1 L649.0,335.4 L651.0,341.4 L645.6,343.3 L640.4,345.6 L637.7,339.8 L635.2,336.3 L632.0,333.2 L628.4,330.3 L624.3,327.7 L621.2,329.4 L618.1,331.3 L618.3,336.1 L619.0,340.7 L620.1,345.0 L621.9,348.9 L625.6,354.1 L621.0,357.6 L616.6,361.3 L612.4,356.5 L608.9,354.0 L605.0,351.9 L600.6,350.2 L596.0,348.9 L593.5,351.5 L591.1,354.2 L592.8,358.7 L594.8,362.9 L597.1,366.7 L600.0,369.9 L605.0,373.8 L601.6,378.4 L598.5,383.2 L593.1,380.0 L589.0,378.5 L584.6,377.7 L580.0,377.4 L575.2,377.5 L573.6,380.7 L572.1,384.0 L575.0,387.8 L578.1,391.2 L581.5,394.2 L585.2,396.4 L591.1,398.7 L589.3,404.1 L587.8,409.6 L581.6,408.1 L577.3,407.9 L572.8,408.4 L568.3,409.4 L563.7,410.9 L563.1,414.5 L562.7,418.1 L566.6,420.9 L570.6,423.2 L574.7,425.0 L578.9,426.1 L585.2,426.5 L585.0,432.2 L585.2,437.9 L578.9,438.3 L574.7,439.4 L570.6,441.2 L566.6,443.5 L562.7,446.3 L563.1,449.9 L563.7,453.5 L568.3,455.0 L572.8,456.0 L577.3,456.5 L581.6,456.3 L587.8,454.8 L589.3,460.3 L591.1,465.7 L585.2,468.0 L581.5,470.2 L578.1,473.2 L575.0,476.6 L572.1,480.4 L573.6,483.7 L575.2,486.9 L580.0,487.0 L584.6,486.7 L589.0,485.9 L593.1,484.4 L598.5,481.2 L601.6,486.0 L605.0,490.6 L600.0,494.5 L597.1,497.7 L594.8,501.5 L592.8,505.7 L591.1,510.2 L593.5,512.9 L596.0,515.5 L600.6,514.2 L605.0,512.5 L608.9,510.4 L612.4,507.9 L616.6,503.1 L621.0,506.8 L625.6,510.3 L621.9,515.5 L620.1,519.4 L619.0,523.7 L618.3,528.3 L618.1,533.1 L621.2,535.0 L624.3,536.7 L628.4,534.1 L632.0,531.2 L635.2,528.1 L637.7,524.6 L640.4,518.8 L645.6,521.1 L651.0,523.0 L649.0,529.0 L648.5,533.3 L648.7,537.8 L649.4,542.4 L650.6,547.0 L654.1,547.9 L657.6,548.7 L660.7,544.9 L663.3,541.1 L665.4,537.2 L666.8,533.1 L667.7,526.8 L673.4,527.4 L679.1,527.6 L679.0,534.0 L679.7,538.2 L681.2,542.5 L683.3,546.6 L685.8,550.8 L689.4,550.5 L693.0,550.2 L694.8,545.8 L696.2,541.3 L697.0,536.9 L697.2,532.7 L696.1,526.4 L701.7,525.3 L707.3,523.8 L709.1,529.9 L711.0,533.7 L713.7,537.3 L716.9,540.7 L720.5,543.9 L723.9,542.7 L727.2,541.3 L727.7,536.5 L727.7,531.9 L727.2,527.4 L726.0,523.3 L723.2,517.6 L728.2,514.9 L733.1,511.9 L736.6,517.2 L739.6,520.2 L743.2,522.9 L747.3,525.2 L751.6,527.2 L754.5,525.0 L757.3,522.7 L756.3,518.0 L754.9,513.5 L753.2,509.4 L750.9,505.8 L746.5,501.2 L750.5,497.1 L754.2,492.8 L759.2,496.9 L762.9,498.9 L767.2,500.4 L771.7,501.4 L776.5,502.0 L778.6,499.1 L780.5,496.0 L778.2,491.8 L775.6,488.0 L772.7,484.6 L769.4,481.8 L763.9,478.7 L766.5,473.6 L768.8,468.4 L774.7,470.8 L778.9,471.6 L783.4,471.8 L788.0,471.4 L792.8,470.6 L793.9,467.2 L794.9,463.7 L791.4,460.4 L787.8,457.5 L784.0,455.1 L780.1,453.4 L773.9,452.1Z" fill="none" stroke="#fff" stroke-width="1" shape-rendering="crispEdges"/>
<path d="M1147.4,432.2 L1147.3,427.2 L1149.0,427.2 L1154.3,426.1 L1159.6,424.3 L1164.9,421.9 L1170.1,419.0 L1169.8,415.1 L1169.5,411.2 L1163.8,409.3 L1158.2,407.9 L1152.7,407.0 L1147.2,406.8 L1145.5,407.1 L1144.7,402.2 L1143.8,397.3 L1145.5,397.0 L1150.5,395.0 L1155.5,392.2 L1160.2,389.0 L1164.9,385.2 L1163.9,381.5 L1162.9,377.7 L1157.0,376.8 L1151.2,376.3 L1145.6,376.4 L1140.2,377.2 L1138.6,377.8 L1136.9,373.1 L1135.2,368.4 L1136.7,367.8 L1141.4,365.0 L1145.8,361.4 L1149.9,357.4 L1153.8,352.9 L1152.2,349.3 L1150.5,345.8 L1144.6,345.9 L1138.8,346.5 L1133.3,347.5 L1128.1,349.3 L1126.6,350.1 L1124.2,345.8 L1121.7,341.5 L1123.1,340.6 L1127.2,337.0 L1130.9,332.8 L1134.2,328.0 L1137.3,322.9 L1135.1,319.7 L1132.9,316.6 L1127.0,317.7 L1121.4,319.3 L1116.2,321.3 L1111.4,323.9 L1110.1,324.9 L1106.9,321.1 L1103.7,317.3 L1104.9,316.2 L1108.4,312.0 L1111.2,307.1 L1113.7,301.9 L1115.9,296.3 L1113.1,293.6 L1110.4,290.8 L1104.8,293.0 L1099.6,295.5 L1094.7,298.3 L1090.5,301.8 L1089.4,303.0 L1085.6,299.8 L1081.8,296.6 L1082.8,295.3 L1085.4,290.5 L1087.4,285.3 L1089.0,279.7 L1090.1,273.8 L1087.0,271.6 L1083.8,269.4 L1078.7,272.5 L1073.9,275.8 L1069.7,279.5 L1066.1,283.6 L1065.2,285.0 L1060.9,282.5 L1056.6,280.1 L1057.4,278.6 L1059.2,273.4 L1060.2,267.9 L1060.8,262.1 L1060.9,256.2 L1057.4,254.5 L1053.8,252.9 L1049.3,256.8 L1045.3,260.9 L1041.7,265.3 L1038.9,270.0 L1038.3,271.5 L1033.6,269.8 L1028.9,268.1 L1029.5,266.5 L1030.3,261.1 L1030.4,255.5 L1029.9,249.7 L1029.0,243.8 L1025.2,242.8 L1021.5,241.8 L1017.7,246.5 L1014.5,251.2 L1011.7,256.2 L1009.7,261.2 L1009.4,262.9 L1004.5,262.0 L999.6,261.2 L999.9,259.5 L999.7,254.0 L998.8,248.5 L997.4,242.9 L995.5,237.2 L991.6,236.9 L987.7,236.6 L984.8,241.8 L982.4,247.1 L980.6,252.4 L979.5,257.7 L979.5,259.4 L974.5,259.3 L969.5,259.4 L969.5,257.7 L968.4,252.4 L966.6,247.1 L964.2,241.8 L961.3,236.6 L957.4,236.9 L953.5,237.2 L951.6,242.9 L950.2,248.5 L949.3,254.0 L949.1,259.5 L949.4,261.2 L944.5,262.0 L939.6,262.9 L939.3,261.2 L937.3,256.2 L934.5,251.2 L931.3,246.5 L927.5,241.8 L923.8,242.8 L920.0,243.8 L919.1,249.7 L918.6,255.5 L918.7,261.1 L919.5,266.5 L920.1,268.1 L915.4,269.8 L910.7,271.5 L910.1,270.0 L907.3,265.3 L903.7,260.9 L899.7,256.8 L895.2,252.9 L891.6,254.5 L888.1,256.2 L888.2,262.1 L888.8,267.9 L889.8,273.4 L891.6,278.6 L892.4,280.1 L888.1,282.5 L883.8,285.0 L882.9,283.6 L879.3,279.5 L875.1,275.8 L870.3,272.5 L865.2,269.4 L862.0,271.6 L858.9,273.8 L860.0,279.7 L861.6,285.3 L863.6,290.5 L866.2,295.3 L867.2,296.6 L863.4,299.8 L859.6,303.0 L858.5,301.8 L854.3,298.3 L849.4,295.5 L844.2,293.0 L838.6,290.8 L835.9,293.6 L833.1,296.3 L835.3,301.9 L837.8,307.1 L840.6,312.0 L844.1,316.2 L845.3,317.3 L842.1,321.1 L838.9,324.9 L837.6,323.9 L832.8,321.3 L827.6,319.3 L822.0,317.7 L816.1,316.6 L813.9,319.7 L811.7,322.9 L814.8,328.0 L818.1,332.8 L821.8,337.0 L825.9,340.6 L827.3,341.5 L824.8,345.8 L822.4,350.1 L820.9,349.3 L815.7,347.5 L810.2,346.5 L804.4,345.9 L798.5,345.8 L796.8,349.3 L795.2,352.9 L799.1,357.4 L803.2,361.4 L807.6,365.0 L812.3,367.8 L813.8,368.4 L812.1,373.1 L810.4,377.8 L808.8,377.2 L803.4,376.4 L797.8,376.3 L792.0,376.8 L786.1,377.7 L785.1,381.5 L784.1,385.2 L788.8,389.0 L793.5,392.2 L798.5,395.0 L803.5,397.0 L805.2,397.3 L804.3,402.2 L803.5,407.1 L801.8,406.8 L796.3,407.0 L790.8,407.9 L785.2,409.3 L779.5,411.2 L779.2,415.1 L778.9,419.0 L784.1,421.9 L789.4,424.3 L794.7,426.1 L800.0,427.2 L801.7,427.2 L801.6,432.2 L801.7,437.2 L800.0,437.2 L794.7,438.3 L789.4,440.1 L784.1,442.5 L778.9,445.4 L779.2,449.3 L779.5,453.2 L785.2,455.1 L790.8,456.5 L796.3,457.4 L801.8,457.6 L803.5,457.3 L804.3,462.2 L805.2,467.1 L803.5,467.4 L798.5,469.4 L793.5,472.2 L788.8,475.4 L784.1,479.2 L785.1,482.9 L786.1,486.7 L792.0,487.6 L797.8,488.1 L803.4,488.0 L808.8,487.2 L810.4,486.6 L812.1,491.3 L813.8,496.0 L812.3,496.6 L807.6,499.4 L803.2,503.0 L799.1,507.0 L795.2,511.5 L796.8,515.1 L798.5,518.6 L804.4,518.5 L810.2,517.9 L815.7,516.9 L820.9,515.1 L822.4,514.3 L824.8,518.6 L827.3,522.9 L825.9,523.8 L821.8,527.4 L818.1,531.6 L814.8,536.4 L811.7,541.5 L813.9,544.7 L816.1,547.8 L822.0,546.7 L827.6,545.1 L832.8,543.1 L837.6,540.5 L838.9,539.5 L842.1,543.3 L845.3,547.1 L844.1,548.2 L840.6,552.4 L837.8,557.3 L835.3,562.5 L833.1,568.1 L835.9,570.8 L838.6,573.6 L844.2,571.4 L849.4,568.9 L854.3,566.1 L858.5,562.6 L859.6,561.4 L863.4,564.6 L867.2,567.8 L866.2,569.1 L863.6,573.9 L861.6,579.1 L860.0,584.7 L858.9,590.6 L862.0,592.8 L865.2,595.0 L870.3,591.9 L875.1,588.6 L879.3,584.9 L882.9,580.8 L883.8,579.4 L888.1,581.9 L892.4,584.3 L891.6,585.8 L889.8,591.0 L888.8,596.5 L888.2,602.3 L888.1,608.2 L891.6,609.9 L895.2,611.5 L899.7,607.6 L903.7,603.5 L907.3,599.1 L910.1,594.4 L910.7,592.9 L915.4,594.6 L920.1,596.3 L919.5,597.9 L918.7,603.3 L918.6,608.9 L919.1,614.7 L920.0,620.6 L923.8,621.6 L927.5,622.6 L931.3,617.9 L934.5,613.2 L937.3,608.2 L939.3,603.2 L939.6,601.5 L944.5,602.4 L949.4,603.2 L949.1,604.9 L949.3,610.4 L950.2,615.9 L951.6,621.5 L953.5,627.2 L957.4,627.5 L961.3,627.8 L964.2,622.6 L966.6,617.3 L968.4,612.0 L969.5,606.7 L969.5,605.0 L974.5,605.1 L979.5,605.0 L979.5,606.7 L980.6,612.0 L982.4,617.3 L984.8,622.6 L987.7,627.8 L991.6,627.5 L995.5,627.2 L997.4,621.5 L998.8,615.9 L999.7,610.4 L999.9,604.9 L999.6,603.2 L1004.5,602.4 L1009.4,601.5 L1009.7,603.2 L1011.7,608.2 L1014.5,613.2 L1017.7,617.9 L1021.5,622.6 L1025.2,621.6 L1029.0,620.6 L1029.9,614.7 L1030.4,608.9 L1030.3,603.3 L1029.5,597.9 L1028.9,596.3 L1033.6,594.6 L1038.3,592.9 L1038.9,594.4 L1041.7,599.1 L1045.3,603.5 L1049.3,607.6 L1053.8,611.5 L1057.4,609.9 L1060.9,608.2 L1060.8,602.3 L1060.2,596.5 L1059.2,591.0 L1057.4,585.8 L1056.6,584.3 L1060.9,581.9 L1065.2,579.4 L1066.1,580.8 L1069.7,584.9 L1073.9,588.6 L1078.7,591.9 L1083.8,595.0 L1087.0,592.8 L1090.1,590.6 L1089.0,584.7 L1087.4,579.1 L1085.4,573.9 L1082.8,569.1 L1081.8,567.8 L1085.6,564.6 L1089.4,561.4 L1090.5,562.6 L1094.7,566.1 L1099.6,568.9 L1104.8,571.4 L1110.4,573.6 L1113.1,570.8 L1115.9,568.1 L1113.7,562.5 L1111.2,557.3 L1108.4,552.4 L1104.9,548.2 L1103.7,547.1 L1106.9,543.3 L1110.1,539.5 L1111.4,540.5 L1116.2,543.1 L1121.4,545.1 L1127.0,546.7 L1132.9,547.8 L1135.1,544.7 L1137.3,541.5 L1134.2,536.4 L1130.9,531.6 L1127.2,527.4 L1123.1,523.8 L1121.7,522.9 L1124.2,518.6 L1126.6,514.3 L1128.1,515.1 L1133.3,516.9 L1138.8,517.9 L1144.6,518.5 L1150.5,518.6 L1152.2,515.1 L1153.8,511.5 L1149.9,507.0 L1145.8,503.0 L1141.4,499.4 L1136.7,496.6 L1135.2,496.0 L1136.9,491.3 L1138.6,486.6 L1140.2,487.2 L1145.6,488.0 L1151.2,488.1 L1157.0,487.6 L1162.9,486.7 L1163.9,482.9 L1164.9,479.2 L1160.2,475.4 L1155.5,472.2 L1150.5,469.4 L1145.5,467.4 L1143.8,467.1 L1144.7,462.2 L1145.5,457.3 L1147.2,457.6 L1152.7,457.4 L1158.2,456.5 L1163.8,455.1 L1169.5,453.2 L1169.8,449.3 L1170.1,445.4 L1164.9,442.5 L1159.6,440.1 L1154.3,438.3 L1149.0,437.2 L1147.3,437.2Z" fill="none" stroke="#90e890" stroke-width="1" shape-rendering="crispEdges"/>
<path d="M706.4,177.6 L706.3,172.6 L708.0,172.6 L713.3,171.5 L718.6,169.7 L723.9,167.3 L729.1,164.4 L728.8,160.5 L728.5,156.6 L722.8,154.7 L717.2,153.2 L711.7,152.3 L706.2,152.2 L704.5,152.5 L703.7,147.6 L702.8,142.7 L704.5,142.4 L709.5,140.4 L714.5,137.6 L719.2,134.3 L723.9,130.6 L722.9,126.8 L721.9,123.1 L716.0,122.2 L710.2,121.7 L704.6,121.8 L699.2,122.6 L697.6,123.2 L695.9,118.5 L694.2,113.8 L695.7,113.2 L700.4,110.4 L704.8,106.8 L708.9,102.8 L712.8,98.3 L711.2,94.7 L709.5,91.2 L703.6,91.3 L697.8,91.9 L692.3,92.9 L687.1,94.7 L685.6,95.5 L683.2,91.2 L680.7,86.9 L682.1,86.0 L686.2,82.4 L689.9,78.2 L693.2,73.4 L696.3,68.3 L694.1,65.1 L691.9,62.0 L686.0,63.1 L680.4,64.6 L675.2,66.6 L670.4,69.3 L669.1,70.3 L665.9,66.5 L662.7,62.7 L663.9,61.6 L667.4,57.3 L670.2,52.5 L672.7,47.3 L674.9,41.7 L672.1,38.9 L669.4,36.2 L663.8,38.4 L658.6,40.9 L653.7,43.7 L649.5,47.1 L648.4,48.4 L644.6,45.2 L640.8,42.0 L641.8,40.7 L644.4,35.9 L646.4,30.7 L648.0,25.1 L649.1,19.2 L646.0,17.0 L642.8,14.8 L637.7,17.8 L632.9,21.2 L628.7,24.9 L625.1,29.0 L624.2,30.4 L619.9,27.9 L615.6,25.5 L616.4,24.0 L618.2,18.8 L619.2,13.3 L619.8,7.5 L619.9,1.6 L616.4,-0.1 L612.8,-1.7 L608.3,2.2 L604.3,6.3 L600.7,10.7 L597.9,15.3 L597.3,16.9 L592.6,15.2 L587.9,13.5 L588.5,11.9 L589.3,6.5 L589.4,0.9 L588.9,-4.9 L588.0,-10.8 L584.2,-11.8 L580.5,-12.8 L576.7,-8.1 L573.5,-3.4 L570.7,1.5 L568.7,6.6 L568.4,8.3 L563.5,7.4 L558.6,6.6 L558.9,4.9 L558.7,-0.6 L557.8,-6.1 L556.4,-11.7 L554.5,-17.4 L550.6,-17.7 L546.7,-18.0 L543.8,-12.8 L541.4,-7.6 L539.6,-2.2 L538.5,3.1 L538.5,4.8 L533.5,4.7 L528.5,4.8 L528.5,3.1 L527.4,-2.2 L525.6,-7.6 L523.2,-12.8 L520.3,-18.0 L516.4,-17.7 L512.5,-17.4 L510.6,-11.7 L509.2,-6.1 L508.3,-0.6 L508.1,4.9 L508.4,6.6 L503.5,7.4 L498.6,8.3 L498.3,6.6 L496.3,1.5 L493.5,-3.4 L490.3,-8.1 L486.5,-12.8 L482.8,-11.8 L479.0,-10.8 L478.1,-4.9 L477.6,0.9 L477.7,6.5 L478.5,11.9 L479.1,13.5 L474.4,15.2 L469.7,16.9 L469.1,15.3 L466.3,10.7 L462.7,6.3 L458.7,2.2 L454.2,-1.7 L450.6,-0.1 L447.1,1.6 L447.2,7.5 L447.8,13.3 L448.8,18.8 L450.6,24.0 L451.4,25.5 L447.1,27.9 L442.8,30.4 L441.9,29.0 L438.3,24.9 L434.1,21.2 L429.3,17.8 L424.2,14.8 L421.0,17.0 L417.9,19.2 L419.0,25.1 L420.6,30.7 L422.6,35.9 L425.2,40.7 L426.2,42.0 L422.4,45.2 L418.6,48.4 L417.5,47.1 L413.3,43.7 L408.4,40.9 L403.2,38.4 L397.6,36.2 L394.9,38.9 L392.1,41.7 L394.3,47.3 L396.8,52.5 L399.6,57.3 L403.1,61.6 L404.3,62.7 L401.1,66.5 L397.9,70.3 L396.6,69.3 L391.8,66.6 L386.6,64.6 L381.0,63.1 L375.1,62.0 L372.9,65.1 L370.7,68.3 L373.8,73.4 L377.1,78.2 L380.8,82.4 L384.9,86.0 L386.3,86.9 L383.8,91.2 L381.4,95.5 L379.9,94.7 L374.7,92.9 L369.2,91.9 L363.4,91.3 L357.5,91.2 L355.8,94.7 L354.2,98.3 L358.1,102.8 L362.2,106.8 L366.6,110.4 L371.3,113.2 L372.8,113.8 L371.1,118.5 L369.4,123.2 L367.8,122.6 L362.4,121.8 L356.8,121.7 L351.0,122.2 L345.1,123.1 L344.1,126.8 L343.1,130.6 L347.8,134.3 L352.5,137.6 L357.5,140.4 L362.5,142.4 L364.2,142.7 L363.3,147.6 L362.5,152.5 L360.8,152.2 L355.3,152.3 L349.8,153.2 L344.2,154.7 L338.5,156.6 L338.2,160.5 L337.9,164.4 L343.1,167.3 L348.4,169.7 L353.7,171.5 L359.0,172.6 L360.7,172.6 L360.6,177.6 L360.7,182.6 L359.0,182.6 L353.7,183.7 L348.4,185.5 L343.1,187.9 L337.9,190.8 L338.2,194.7 L338.5,198.5 L344.2,200.5 L349.8,201.9 L355.3,202.8 L360.8,202.9 L362.5,202.7 L363.3,207.6 L364.2,212.5 L362.5,212.8 L357.5,214.8 L352.5,217.5 L347.8,220.8 L343.1,224.6 L344.1,228.3 L345.1,232.1 L351.0,233.0 L356.8,233.5 L362.4,233.4 L367.8,232.6 L369.4,232.0 L371.1,236.7 L372.8,241.4 L371.3,242.0 L366.6,244.8 L362.2,248.4 L358.1,252.4 L354.2,256.9 L355.8,260.5 L357.5,264.0 L363.4,263.9 L369.2,263.3 L374.7,262.2 L379.9,260.5 L381.4,259.7 L383.8,264.0 L386.3,268.3 L384.9,269.2 L380.8,272.8 L377.1,277.0 L373.8,281.7 L370.7,286.9 L372.9,290.1 L375.1,293.2 L381.0,292.1 L386.6,290.5 L391.8,288.5 L396.6,285.9 L397.9,284.9 L401.1,288.7 L404.3,292.5 L403.1,293.6 L399.6,297.8 L396.8,302.7 L394.3,307.9 L392.1,313.5 L394.9,316.2 L397.6,319.0 L403.2,316.8 L408.4,314.3 L413.3,311.4 L417.5,308.0 L418.6,306.8 L422.4,310.0 L426.2,313.1 L425.2,314.5 L422.6,319.3 L420.6,324.5 L419.0,330.1 L417.9,335.9 L421.0,338.2 L424.2,340.4 L429.3,337.3 L434.1,334.0 L438.3,330.3 L441.9,326.2 L442.8,324.7 L447.1,327.3 L451.4,329.7 L450.6,331.2 L448.8,336.4 L447.8,341.9 L447.2,347.7 L447.1,353.6 L450.6,355.3 L454.2,356.9 L458.7,353.0 L462.7,348.9 L466.3,344.5 L469.1,339.8 L469.7,338.3 L474.4,340.0 L479.1,341.7 L478.5,343.3 L477.7,348.7 L477.6,354.3 L478.1,360.1 L479.0,365.9 L482.8,367.0 L486.5,368.0 L490.3,363.3 L493.5,358.5 L496.3,353.6 L498.3,348.6 L498.6,346.9 L503.5,347.8 L508.4,348.6 L508.1,350.3 L508.3,355.7 L509.2,361.3 L510.6,366.9 L512.5,372.5 L516.4,372.9 L520.3,373.2 L523.2,368.0 L525.6,362.7 L527.4,357.4 L528.5,352.1 L528.5,350.4 L533.5,350.4 L538.5,350.4 L538.5,352.1 L539.6,357.4 L541.4,362.7 L543.8,368.0 L546.7,373.2 L550.6,372.9 L554.5,372.5 L556.4,366.9 L557.8,361.3 L558.7,355.7 L558.9,350.3 L558.6,348.6 L563.5,347.8 L568.4,346.9 L568.7,348.6 L570.7,353.6 L573.5,358.5 L576.7,363.3 L580.5,368.0 L584.2,367.0 L588.0,365.9 L588.9,360.1 L589.4,354.3 L589.3,348.7 L588.5,343.3 L587.9,341.7 L592.6,340.0 L597.3,338.3 L597.9,339.8 L600.7,344.5 L604.3,348.9 L608.3,353.0 L612.8,356.9 L616.4,355.3 L619.9,353.6 L619.8,347.7 L619.2,341.9 L618.2,336.4 L616.4,331.2 L615.6,329.7 L619.9,327.3 L624.2,324.7 L625.1,326.2 L628.7,330.3 L632.9,334.0 L637.7,337.3 L642.8,340.4 L646.0,338.2 L649.1,335.9 L648.0,330.1 L646.4,324.5 L644.4,319.3 L641.8,314.5 L640.8,313.1 L644.6,310.0 L648.4,306.8 L649.5,308.0 L653.7,311.4 L658.6,314.3 L663.8,316.8 L669.4,319.0 L672.1,316.2 L674.9,313.5 L672.7,307.9 L670.2,302.7 L667.4,297.8 L663.9,293.6 L662.7,292.5 L665.9,288.7 L669.1,284.9 L670.4,285.9 L675.2,288.5 L680.4,290.5 L686.0,292.1 L691.9,293.2 L694.1,290.1 L696.3,286.9 L693.2,281.7 L689.9,277.0 L686.2,272.8 L682.1,269.2 L680.7,268.3 L683.2,264.0 L685.6,259.7 L687.1,260.5 L692.3,262.2 L697.8,263.3 L703.6,263.9 L709.5,264.0 L711.2,260.5 L712.8,256.9 L708.9,252.4 L704.8,248.4 L700.4,244.8 L695.7,242.0 L694.2,241.4 L695.9,236.7 L697.6,232.0 L699.2,232.6 L704.6,233.4 L710.2,233.5 L716.0,233.0 L721.9,232.1 L722.9,228.3 L723.9,224.6 L719.2,220.8 L714.5,217.5 L709.5,214.8 L704.5,212.8 L702.8,212.5 L703.7,207.6 L704.5,202.7 L706.2,202.9 L711.7,202.8 L717.2,201.9 L722.8,200.5 L728.5,198.5 L728.8,194.7 L729.1,190.8 L723.9,187.9 L718.6,185.5 L713.3,183.7 L708.0,182.6 L706.3,182.6Z" fill="none" stroke="#90e890" stroke-width="1" shape-rendering="crispEdges"/>
<path d="M706.4,686.8 L706.3,681.8 L708.0,681.8 L713.3,680.7 L718.6,678.9 L723.9,676.5 L729.1,673.6 L728.8,669.7 L728.5,665.9 L722.8,663.9 L717.2,662.5 L711.7,661.6 L706.2,661.5 L704.5,661.7 L703.7,656.8 L702.8,651.9 L704.5,651.6 L709.5,649.6 L714.5,646.9 L719.2,643.6 L723.9,639.8 L722.9,636.1 L721.9,632.3 L716.0,631.4 L710.2,630.9 L704.6,631.0 L699.2,631.8 L697.6,632.4 L695.9,627.7 L694.2,623.0 L695.7,622.4 L700.4,619.6 L704.8,616.0 L708.9,612.0 L712.8,607.5 L711.2,603.9 L709.5,600.4 L703.6,600.5 L697.8,601.1 L692.3,602.2 L687.1,603.9 L685.6,604.7 L683.2,600.4 L680.7,596.1 L682.1,595.2 L686.2,591.6 L689.9,587.4 L693.2,582.7 L696.3,577.5 L694.1,574.3 L691.9,571.2 L686.0,572.3 L680.4,573.9 L675.2,575.9 L670.4,578.5 L669.1,579.5 L665.9,575.7 L662.7,571.9 L663.9,570.8 L667.4,566.6 L670.2,561.7 L672.7,556.5 L674.9,550.9 L672.1,548.2 L669.4,545.4 L663.8,547.6 L658.6,550.1 L653.7,553.0 L649.5,556.4 L648.4,557.6 L644.6,554.4 L640.8,551.3 L641.8,549.9 L644.4,545.1 L646.4,539.9 L648.0,534.3 L649.1,528.5 L646.0,526.2 L642.8,524.0 L637.7,527.1 L632.9,530.4 L628.7,534.1 L625.1,538.2 L624.2,539.7 L619.9,537.1 L615.6,534.7 L616.4,533.2 L618.2,528.0 L619.2,522.5 L619.8,516.7 L619.9,510.8 L616.4,509.1 L612.8,507.5 L608.3,511.4 L604.3,515.5 L600.7,519.9 L597.9,524.6 L597.3,526.1 L592.6,524.4 L587.9,522.7 L588.5,521.1 L589.3,515.7 L589.4,510.1 L588.9,504.3 L588.0,498.5 L584.2,497.4 L580.5,496.4 L576.7,501.1 L573.5,505.9 L570.7,510.8 L568.7,515.8 L568.4,517.5 L563.5,516.6 L558.6,515.8 L558.9,514.1 L558.7,508.7 L557.8,503.1 L556.4,497.5 L554.5,491.9 L550.6,491.5 L546.7,491.2 L543.8,496.4 L541.4,501.7 L539.6,507.0 L538.5,512.3 L538.5,514.0 L533.5,514.0 L528.5,514.0 L528.5,512.3 L527.4,507.0 L525.6,501.7 L523.2,496.4 L520.3,491.2 L516.4,491.5 L512.5,491.9 L510.6,497.5 L509.2,503.1 L508.3,508.7 L508.1,514.1 L508.4,515.8 L503.5,516.6 L498.6,517.5 L498.3,515.8 L496.3,510.8 L493.5,505.9 L490.3,501.1 L486.5,496.4 L482.8,497.4 L479.0,498.5 L478.1,504.3 L477.6,510.1 L477.7,515.7 L478.5,521.1 L479.1,522.7 L474.4,524.4 L469.7,526.1 L469.1,524.6 L466.3,519.9 L462.7,515.5 L458.7,511.4 L454.2,507.5 L450.6,509.1 L447.1,510.8 L447.2,516.7 L447.8,522.5 L448.8,528.0 L450.6,533.2 L451.4,534.7 L447.1,537.1 L442.8,539.7 L441.9,538.2 L438.3,534.1 L434.1,530.4 L429.3,527.1 L424.2,524.0 L421.0,526.2 L417.9,528.5 L419.0,534.3 L420.6,539.9 L422.6,545.1 L425.2,549.9 L426.2,551.3 L422.4,554.4 L418.6,557.6 L417.5,556.4 L413.3,553.0 L408.4,550.1 L403.2,547.6 L397.6,545.4 L394.9,548.2 L392.1,550.9 L394.3,556.5 L396.8,561.7 L399.6,566.6 L403.1,570.8 L404.3,571.9 L401.1,575.7 L397.9,579.5 L396.6,578.5 L391.8,575.9 L386.6,573.9 L381.0,572.3 L375.1,571.2 L372.9,574.3 L370.7,577.5 L373.8,582.7 L377.1,587.4 L380.8,591.6 L384.9,595.2 L386.3,596.1 L383.8,600.4 L381.4,604.7 L379.9,603.9 L374.7,602.2 L369.2,601.1 L363.4,600.5 L357.5,600.4 L355.8,603.9 L354.2,607.5 L358.1,612.0 L362.2,616.0 L366.6,619.6 L371.3,622.4 L372.8,623.0 L371.1,627.7 L369.4,632.4 L367.8,631.8 L362.4,631.0 L356.8,630.9 L351.0,631.4 L345.1,632.3 L344.1,636.1 L343.1,639.8 L347.8,643.6 L352.5,646.9 L357.5,649.6 L362.5,651.6 L364.2,651.9 L363.3,656.8 L362.5,661.7 L360.8,661.5 L355.3,661.6 L349.8,662.5 L344.2,663.9 L338.5,665.9 L338.2,669.7 L337.9,673.6 L343.1,676.5 L348.4,678.9 L353.7,680.7 L359.0,681.8 L360.7,681.8 L360.6,686.8 L360.7,691.8 L359.0,691.8 L353.7,692.9 L348.4,694.7 L343.1,697.1 L337.9,700.0 L338.2,703.9 L338.5,707.8 L344.2,709.7 L349.8,711.2 L355.3,712.1 L360.8,712.2 L362.5,711.9 L363.3,716.8 L364.2,721.7 L362.5,722.0 L357.5,724.0 L352.5,726.8 L347.8,730.1 L343.1,733.8 L344.1,737.6 L345.1,741.3 L351.0,742.2 L356.8,742.7 L362.4,742.6 L367.8,741.8 L369.4,741.2 L371.1,745.9 L372.8,750.6 L371.3,751.2 L366.6,754.0 L362.2,757.6 L358.1,761.6 L354.2,766.1 L355.8,769.7 L357.5,773.2 L363.4,773.1 L369.2,772.5 L374.7,771.5 L379.9,769.7 L381.4,768.9 L383.8,773.2 L386.3,777.5 L384.9,778.4 L380.8,782.0 L377.1,786.2 L373.8,791.0 L370.7,796.1 L372.9,799.3 L375.1,802.4 L381.0,801.3 L386.6,799.8 L391.8,797.8 L396.6,795.1 L397.9,794.1 L401.1,797.9 L404.3,801.7 L403.1,802.8 L399.6,807.1 L396.8,811.9 L394.3,817.1 L392.1,822.7 L394.9,825.5 L397.6,828.2 L403.2,826.0 L408.4,823.5 L413.3,820.7 L417.5,817.3 L418.6,816.0 L422.4,819.2 L426.2,822.4 L425.2,823.7 L422.6,828.5 L420.6,833.7 L419.0,839.3 L417.9,845.2 L421.0,847.4 L424.2,849.6 L429.3,846.6 L434.1,843.2 L438.3,839.5 L441.9,835.4 L442.8,834.0 L447.1,836.5 L451.4,838.9 L450.6,840.4 L448.8,845.6 L447.8,851.1 L447.2,856.9 L447.1,862.8 L450.6,864.5 L454.2,866.1 L458.7,862.2 L462.7,858.1 L466.3,853.7 L469.1,849.1 L469.7,847.5 L474.4,849.2 L479.1,850.9 L478.5,852.5 L477.7,857.9 L477.6,863.5 L478.1,869.3 L479.0,875.2 L482.8,876.2 L486.5,877.2 L490.3,872.5 L493.5,867.8 L496.3,862.9 L498.3,857.8 L498.6,856.1 L503.5,857.0 L508.4,857.8 L508.1,859.5 L508.3,865.0 L509.2,870.5 L510.6,876.1 L512.5,881.8 L516.4,882.1 L520.3,882.4 L523.2,877.2 L525.6,872.0 L527.4,866.6 L528.5,861.3 L528.5,859.6 L533.5,859.7 L538.5,859.6 L538.5,861.3 L539.6,866.6 L541.4,872.0 L543.8,877.2 L546.7,882.4 L550.6,882.1 L554.5,881.8 L556.4,876.1 L557.8,870.5 L558.7,865.0 L558.9,859.5 L558.6,857.8 L563.5,857.0 L568.4,856.1 L568.7,857.8 L570.7,862.9 L573.5,867.8 L576.7,872.5 L580.5,877.2 L584.2,876.2 L588.0,875.2 L588.9,869.3 L589.4,863.5 L589.3,857.9 L588.5,852.5 L587.9,850.9 L592.6,849.2 L597.3,847.5 L597.9,849.1 L600.7,853.7 L604.3,858.1 L608.3,862.2 L612.8,866.1 L616.4,864.5 L619.9,862.8 L619.8,856.9 L619.2,851.1 L618.2,845.6 L616.4,840.4 L615.6,838.9 L619.9,836.5 L624.2,834.0 L625.1,835.4 L628.7,839.5 L632.9,843.2 L637.7,846.6 L642.8,849.6 L646.0,847.4 L649.1,845.2 L648.0,839.3 L646.4,833.7 L644.4,828.5 L641.8,823.7 L640.8,822.4 L644.6,819.2 L648.4,816.0 L649.5,817.3 L653.7,820.7 L658.6,823.5 L663.8,826.0 L669.4,828.2 L672.1,825.5 L674.9,822.7 L672.7,817.1 L670.2,811.9 L667.4,807.1 L663.9,802.8 L662.7,801.7 L665.9,797.9 L669.1,794.1 L670.4,795.1 L675.2,797.8 L680.4,799.8 L686.0,801.3 L691.9,802.4 L694.1,799.3 L696.3,796.1 L693.2,791.0 L689.9,786.2 L686.2,782.0 L682.1,778.4 L680.7,777.5 L683.2,773.2 L685.6,768.9 L687.1,769.7 L692.3,771.5 L697.8,772.5 L703.6,773.1 L709.5,773.2 L711.2,769.7 L712.8,766.1 L708.9,761.6 L704.8,757.6 L700.4,754.0 L695.7,751.2 L694.2,750.6 L695.9,745.9 L697.6,741.2 L699.2,741.8 L704.6,742.6 L710.2,742.7 L716.0,742.2 L721.9,741.3 L722.9,737.6 L723.9,733.8 L719.2,730.1 L714.5,726.8 L709.5,724.0 L704.5,722.0 L702.8,721.7 L703.7,716.8 L704.5,711.9 L706.2,712.2 L711.7,712.1 L717.2,711.2 L722.8,709.7 L728.5,707.8 L728.8,703.9 L729.1,700.0 L723.9,697.1 L718.6,694.7 L713.3,692.9 L708.0,691.8 L706.3,691.8Z" fill="none" stroke="#90e890" stroke-width="1" shape-rendering="crispEdges"/>
<circle cx="680.5" cy="432.2" r="108.4" fill="none" stroke="#f00" stroke-width="1" shape-rendering="crispEdges" stroke-dasharray="32 17 7 17"/>
<circle cx="680.5" cy="432.2" r="479.9" fill="none" stroke="#f00" stroke-width="1" shape-rendering="crispEdges" stroke-dasharray="32 17 7 17"/>
<circle cx="974.5" cy="432.2" r="185.8" fill="none" stroke="#f00" stroke-width="1" shape-rendering="crispEdges" stroke-dasharray="32 17 7 17"/>
<circle cx="533.5" cy="177.6" r="185.8" fill="none" stroke="#f00" stroke-width="1" shape-rendering="crispEdges" stroke-dasharray="32 17 7 17"/>
<circle cx="533.5" cy="686.8" r="185.8" fill="none" stroke="#f00" stroke-width="1" shape-rendering="crispEdges" stroke-dasharray="32 17 7 17"/>
<line x1="680.5" y1="432.2" x2="974.5" y2="432.2" stroke="#00e5ff" stroke-width="1" shape-rendering="crispEdges" stroke-dasharray="18 9 4 9"/>
<line x1="680.5" y1="432.2" x2="533.5" y2="177.6" stroke="#00e5ff" stroke-width="1" shape-rendering="crispEdges" stroke-dasharray="18 9 4 9"/>
<line x1="680.5" y1="432.2" x2="533.5" y2="686.8" stroke="#00e5ff" stroke-width="1" shape-rendering="crispEdges" stroke-dasharray="18 9 4 9"/>
<path d="M680.5,385.2 v96 M633.5,432.2 h96" stroke="#f00" stroke-width="1" fill="none" stroke-dasharray="5 9 5 11 32 12 22" shape-rendering="crispEdges"/>
<path d="M974.5,416.2 v4 M974.5,432.2 v19 M958.5,432.2 h4 M974.5,432.2 h27" stroke="#f00" stroke-width="1" fill="none" shape-rendering="crispEdges"/>
<path d="M533.5,161.6 v4 M533.5,177.6 v19 M517.5,177.6 h4 M533.5,177.6 h27" stroke="#f00" stroke-width="1" fill="none" shape-rendering="crispEdges"/>
<path d="M533.5,670.8 v4 M533.5,686.8 v19 M517.5,686.8 h4 M533.5,686.8 h27" stroke="#f00" stroke-width="1" fill="none" shape-rendering="crispEdges"/>
<text x="691.0" y="434.0" fill="#ff80c0" font-size="13">Z1</text>
<text x="986.5" y="433.7" fill="#ff80c0" font-size="13">Z2</text>
<text x="545.5" y="179.1" fill="#ff80c0" font-size="13">Z2</text>
<text x="545.5" y="688.3" fill="#ff80c0" font-size="13">Z2</text>
<text x="1183.0" y="434.0" fill="#ff80c0" font-size="13">Z3</text>
<text x="693.0" y="454.0" fill="#ffd700" font-size="13">关</text>
<rect x="538.0" y="0.0" width="90" height="17" fill="#000"/>
<text x="544.0" y="14.0" fill="#f07cf0" font-size="16">操作提示:</text>
<path d="M529.0,4.5 H538.5 V0.0" stroke="#7ce07c" fill="none" stroke-width="1" shape-rendering="crispEdges"/>
</svg>
</div>
<!-- STATUSBAR -->
<div class="a" style="left:2px;top:1011px;width:4px;height:28px;background:#000"></div>
<div class="a" style="left:5px;top:1011px;width:1913px;height:29px;background:#9cb5d5;border-top:2px solid #7f7f7f;border-left:2px solid #8a8a8a;border-bottom:1px solid #fff"></div>
<div class="a" style="left:2px;top:1038px;width:1916px;height:1px;background:#8c8c8c"></div>
<div class="t" style="left:15px;top:1023px;font-size:14px;font-weight:bold;font-family:'Liberation Serif',serif">直线起点坐标:</div>
<div class="t" style="left:135px;top:1023px;font-size:14px;font-weight:bold;color:#7a2ae8">X:</div>
<div class="a" style="left:167px;top:1015px;width:86px;height:23px;background:#fff;border:1px solid #888"></div>
<div class="t" style="left:171px;top:1020px;font-size:14px;font-weight:bold">0</div>
<div class="t" style="left:263px;top:1022px;font-size:14px;font-weight:bold;color:#7a2ae8">Y:</div>
<div class="a" style="left:281px;top:1015px;width:102px;height:23px;background:#fff;border:1px solid #888"></div>
<div class="t" style="left:285px;top:1020px;font-size:14px;font-weight:bold">0</div>
<div class="t" style="left:396px;top:1020px;font-size:14px;color:#7a2ae8;font-weight:bold">直线长度:</div>
<div class="a" style="left:492px;top:1013px;width:73px;height:22px;background:#fff;border:1px solid #888"></div>
<div class="t" style="left:495px;top:1018px;font-size:14px;font-weight:bold">300</div>
<div class="t" style="left:570px;top:1020px;font-size:14px;color:#7a2ae8;font-weight:bold">角度:</div>
<div class="a" style="left:621px;top:1014px;width:42px;height:23px;background:#fff;border:1px solid #888"></div>
<div class="t" style="left:624px;top:1020px;font-size:14px;font-weight:bold">0</div>
<div class="a" style="left:671px;top:1014px;width:53px;height:25px;background:#dcdcdc;border:2px solid #2a78d8"></div>
<div class="t" style="left:681px;top:1020px;font-size:14px;font-weight:bold;font-family:'Liberation Serif',serif">画线</div>
<div class="chk" style="left:894px;top:1021px"></div>
<div class="t" style="left:913px;top:1021px;font-size:14px;font-weight:bold;font-family:'Liberation Serif',serif">整数点5</div>
<div class="chk" style="left:989px;top:1020px"></div>
<div class="t" style="left:1007px;top:1020px;font-size:14px">捕捉选项</div>
<div class="chk" style="left:1089px;top:1020px"></div>
<div class="t" style="left:1108px;top:1021px;font-size:14px">正交</div>
<div class="a" style="left:1189px;top:1017px;width:71px;height:22px;background:#fff;border:1px solid #999"></div>
<div class="a" style="left:1282px;top:1017px;width:57px;height:22px;background:#fff;border:1px solid #999"></div>
<div class="chk" style="left:1356px;top:1020px"><svg width="11" height="11" style="position:absolute;left:0;top:0"><path d="M1.5 5.5L4.5 8.5L10 2" stroke="#222" fill="none" stroke-width="1.2"/></svg></div>
<div class="t" style="left:1375px;top:1020px;font-size:14px;font-weight:bold;font-family:'Liberation Serif',serif">工具条</div>
<div class="chk" style="left:1517px;top:1020px"><svg width="11" height="11" style="position:absolute;left:0;top:0"><path d="M1.5 5.5L4.5 8.5L10 2" stroke="#222" fill="none" stroke-width="1.2"/></svg></div>
<div class="t" style="left:1537px;top:1020px;font-size:14px;font-weight:bold;font-family:'Liberation Serif',serif">显示线宽</div>
<!-- TASKBAR -->
<div class="a" style="left:0;top:1040px;width:1920px;height:40px;background:#1f2d3f"></div>
<svg class="a" style="left:16px;top:1052px" width="17" height="17"><path d="M0 2.3L6.8 1.4V7.9H0z M7.7 1.3L17 0V7.9H7.7z M0 8.8H6.8V15.4L0 14.5z M7.7 8.8H17V17L7.7 15.6z" fill="#fff"/></svg>
<svg class="a" style="left:63px;top:1051px" width="18" height="18"><circle cx="11" cy="7" r="5.5" fill="none" stroke="#fff" stroke-width="1.4"/><path d="M7 11L1 17" stroke="#fff" stroke-width="1.5"/></svg>
<div class="a" style="left:102px;top:1052px;width:1px;height:16px;background:#4a8a8a"></div>
<div class="a" style="left:105px;top:1052px;width:1px;height:16px;background:#4a8a8a"></div>
<svg class="a" style="left:131px;top:1050px" width="24" height="21"><path d="M1 1h9l1 2h11v15H1z" fill="#e0a020"/><path d="M1 4h21v14H1z" fill="#f8d060"/><path d="M5 10h15v9h-3.5v-4h-8v4H5z" fill="#3a90e0"/></svg>
<svg class="a" style="left:180px;top:1046px" width="25" height="28"><path d="M1 14L16 2L23 4V26H1z" fill="#68217a"/><path d="M2 8L10 14L19 4L23 5V24L19 25L10 17L2 21Z" fill="#fff"/><path d="M4 11V18L8 14.5Z M17 10V20L11 15.5Z" fill="#68217a"/></svg>
<svg class="a" style="left:229px;top:1047px" width="26" height="26"><circle cx="12" cy="12.5" r="10" fill="#5cbf30" stroke="#e8f8e8" stroke-width="1.6"/><path d="M7 12.5h10c0-3-2-5-5-5s-5 2-5 5c0 3 2 5 5 5 2 0 3.5-1 4.5-2" stroke="#fff" stroke-width="2.4" fill="none"/><path d="M2 21C6 14 14 4 23 2.5" stroke="#40a020" stroke-width="1" fill="none"/></svg>
<div class="a" style="left:266px;top:1040px;width:44px;height:40px;background:#2e4f58"></div>
<svg class="a" style="left:276px;top:1047px" width="26" height="26" viewBox="0 0 26 26"><path d="M13 1C6 1 2 5 2 11c0 5 3 8 7 9h8c4-1 7-4 7-9 0-6-4-10-11-10z" fill="#9060b8"/><path d="M13 3V25M13 7l-3-2M13 7l3-2M13 11l-4-2.5M13 11l4-2.5M13 15l-5-3M13 15l5-3" stroke="#fff" stroke-width="1.6"/><path d="M11 18h4l1 7h-6z" fill="#fff"/></svg>
<div class="a" style="left:123px;top:1078px;width:32px;height:2px;background:#76b9ed"></div>
<div class="a" style="left:155px;top:1078px;width:8px;height:2px;background:#4a7090"></div>
<div class="a" style="left:172px;top:1078px;width:40px;height:2px;background:#76b9ed"></div>
<div class="a" style="left:221px;top:1078px;width:31px;height:2px;background:#76b9ed"></div>
<div class="a" style="left:252px;top:1078px;width:8px;height:2px;background:#4a7090"></div>
<div class="a" style="left:266px;top:1078px;width:44px;height:2px;background:#76b9ed"></div>
<div class="t" style="left:1596px;top:1045px;font-size:12px;color:#fff">42%</div>
<div class="t" style="left:1586px;top:1061px;font-size:12px;color:#fff">内存占用</div>
<svg class="a" style="left:1646px;top:1055px" width="13" height="8"><path d="M1 7L6.5 1.5L12 7" stroke="#fff" fill="none" stroke-width="1.2"/></svg>
<svg class="a" style="left:1667px;top:1051px" width="17" height="17"><circle cx="8.5" cy="8.5" r="7.5" fill="#e8d020" stroke="#30a030" stroke-width="1.8"/><path d="M8.5 4v9M4 8.5h9" stroke="#30a030" stroke-width="2"/></svg>
<svg class="a" style="left:1691px;top:1052px" width="18" height="16"><path d="M3 1.5h14v10H3z M7 15h6M10 11.5v3.5" stroke="#fff" fill="none" stroke-width="1.1"/><path d="M1 1h4v5H1z" fill="#fff"/></svg>
<svg class="a" style="left:1715px;top:1052px" width="18" height="16"><path d="M1 5.5h3l4-4v13l-4-4H1z" stroke="#fff" fill="none" stroke-width="1.1"/><path d="M11 5c1 1.5 1 4.5 0 6M13.5 3c2 2.5 2 7.5 0 10" stroke="#fff" fill="none" stroke-width="1.1"/></svg>
<div class="t" style="left:1738px;top:1051px;font-size:16px;color:#fff">英</div>
<div class="a" style="left:1768px;top:1052px;width:16px;height:16px;background:#fff"></div>
<div class="t" style="left:1769px;top:1053px;font-size:14px;color:#000;font-weight:bold">拼</div>
<div class="t" style="left:1815px;top:1044px;font-size:12px;color:#fff">11:16</div>
<div class="t" style="left:1804px;top:1062px;font-size:12px;color:#fff">2023/2/1</div>
<svg class="a" style="left:1878px;top:1051px" width="18" height="18"><path d="M1 1.5h16v11H8l-3.5 3.5V12.5H1z" stroke="#fff" fill="none" stroke-width="1.1"/></svg>
<div class="a" style="left:1915px;top:1040px;width:1px;height:40px;background:#5a6a7a"></div>
<!-- TOOLTIP -->
<div class="a" style="left:912px;top:582px;width:94px;height:20px;background:#fff;border:1px solid #767676"></div>
<div class="t" style="left:919px;top:586px;font-size:12px;color:#575757">永旺CAD 2023</div>
<div class="a" style="left:920px;top:612px;width:22px;height:5px;background:#2a0000"></div>
<div class="a" style="left:913px;top:592px;width:94px;height:22px;background:#fff;border:1px solid #767676"></div>
<div class="t" style="left:919px;top:596px;font-size:12px;color:#575757">永旺CAD 2023</div>
<!-- dialog shadow -->
<div class="a" style="left:52px;top:45px;width:683px;height:8px;background:#d9dadb;border-top-left-radius:10px;border-top-right-radius:10px"></div>
<div class="a" style="left:726px;top:45px;width:9px;height:32px;background:#d9dadb;border-top-right-radius:10px"></div>
<div class="a" style="left:52px;top:45px;width:8px;height:31px;background:#d9dadb;border-top-left-radius:10px"></div>
<!-- DIALOG -->
<div class="a" style="left:59px;top:52px;width:668px;height:540px;background:#f7f5f8;border:1px solid #444f58"></div>
<div class="a" style="left:60px;top:53px;width:666px;height:30px;background:#fff"></div>
<!-- dialog title -->
<svg class="a" style="left:68px;top:59px" width="16" height="17" viewBox="0 0 16 17"><path d="M8 0C12.5 0 15.7 2.6 15.7 6.2 15.7 9.3 13.5 11.2 10.6 11.8V16H8.6V11.5H7.4V16H5V11.8C2.2 11.2 0 9.3 0 6.2 0 2.6 3.5 0 8 0Z" fill="#8650ac"/><path d="M7.9 2V16" stroke="#fff" stroke-width="1.5"/><path d="M7.6 4.6L4.8 3.2M7.6 7.6L3.4 6.3M7.6 10.2L3 9M8.2 5.6L10.6 4.4M8.2 9L11.6 7.4" stroke="#fff" stroke-width="1.3"/></svg>
<div class="t" style="left:89px;top:61px;font-size:12px">行星轮系</div>
<div class="a" style="left:607px;top:67px;width:11px;height:1px;background:#000"></div>
<div class="a" style="left:652px;top:62px;width:11px;height:11px;border:1px solid #000"></div>
<svg class="a" style="left:697px;top:61px" width="12" height="12"><path d="M0.5 0.5L11.5 11.5M11.5 0.5L0.5 11.5" stroke="#000" stroke-width="1"/></svg>
<!-- image placeholder -->
<div class="a" style="left:72px;top:95px;width:273px;height:227px;background:#2a2a2a;overflow:hidden">
<svg width="273" height="227" font-family="Liberation Sans, sans-serif">
<defs><pattern id="rs" width="3.5" height="10" patternUnits="userSpaceOnUse"><rect width="3.5" height="10" fill="#5a0000"/><rect width="2" height="10" fill="#a00000"/></pattern><pattern id="bs" width="3.5" height="10" patternUnits="userSpaceOnUse"><rect width="3.5" height="10" fill="#1a2a6a"/><rect width="2" height="10" fill="#3a3a9a"/></pattern></defs>
<rect width="273" height="227" fill="#2a2a2a"/>
<ellipse cx="129.5" cy="96.5" rx="104" ry="78" fill="#34346e"/>
<polygon points="232.5,97.5 232.5,99.1 232.4,100.7 232.3,102.3 232.1,103.9 231.9,105.5 231.7,107.2 231.4,108.7 231.1,110.3 230.7,111.9 230.2,113.5 229.8,115.1 229.3,116.6 228.7,118.2 228.1,119.8 227.5,121.3 226.8,122.8 226.0,124.3 225.3,125.8 224.5,127.3 223.6,128.8 222.7,130.3 221.8,131.7 220.8,133.2 219.8,134.6 218.7,136.0 217.6,137.4 216.5,138.8 215.3,140.1 214.1,141.4 212.8,142.8 211.5,144.1 210.2,145.3 208.9,146.6 207.5,147.8 206.0,149.0 204.6,150.2 203.1,151.4 201.6,152.5 200.0,153.6 198.4,154.7 196.8,155.8 195.2,156.8 193.5,157.8 191.8,158.8 190.0,159.8 188.3,160.7 186.5,161.6 184.7,162.5 182.9,163.4 181.0,164.2 179.1,165.0 177.2,165.7 175.3,166.5 173.4,167.2 171.4,167.8 169.4,168.5 167.4,169.1 165.4,169.7 163.4,170.2 161.3,170.7 159.3,171.2 157.2,171.7 155.1,172.1 153.0,172.5 150.9,172.8 148.8,173.1 146.7,173.4 144.5,173.7 142.4,173.9 140.3,174.1 138.1,174.2 136.0,174.3 133.8,174.4 131.7,174.5 129.5,174.5 127.3,174.5 125.2,174.4 123.0,174.3 120.9,174.2 118.7,174.1 116.6,173.9 114.5,173.7 112.3,173.4 110.2,173.1 108.1,172.8 106.0,172.5 103.9,172.1 101.8,171.7 99.7,171.2 97.7,170.7 95.6,170.2 93.6,169.7 91.6,169.1 89.6,168.5 87.6,167.8 85.6,167.2 83.7,166.5 81.8,165.7 79.9,165.0 78.0,164.2 76.1,163.4 74.3,162.5 72.5,161.6 70.7,160.7 69.0,159.8 67.2,158.8 65.5,157.8 63.8,156.8 62.2,155.8 60.6,154.7 59.0,153.6 57.4,152.5 55.9,151.4 54.4,150.2 53.0,149.0 51.5,147.8 50.1,146.6 48.8,145.3 47.5,144.1 46.2,142.8 44.9,141.4 43.7,140.1 42.5,138.8 41.4,137.4 40.3,136.0 39.2,134.6 38.2,133.2 37.2,131.7 36.3,130.3 35.4,128.8 34.5,127.3 33.7,125.8 33.0,124.3 32.2,122.8 31.5,121.3 30.9,119.8 30.3,118.2 29.7,116.6 29.2,115.1 28.8,113.5 28.3,111.9 27.9,110.3 27.6,108.7 27.3,107.2 27.1,105.5 26.9,103.9 26.7,102.3 26.6,100.7 26.5,99.1 26.5,97.5 26.5,95.9 26.6,94.3 26.7,92.7 26.9,91.1 27.1,89.5 27.3,87.8 27.6,86.3 27.9,84.7 28.3,83.1 28.8,81.5 29.2,79.9 29.7,78.4 30.3,76.8 30.9,75.2 31.5,73.7 32.2,72.2 33.0,70.7 33.7,69.2 34.5,67.7 35.4,66.2 36.3,64.7 37.2,63.3 38.2,61.8 39.2,60.4 40.3,59.0 41.4,57.6 42.5,56.2 43.7,54.9 44.9,53.6 46.2,52.2 47.5,50.9 48.8,49.7 50.1,48.4 51.5,47.2 53.0,46.0 54.4,44.8 55.9,43.6 57.4,42.5 59.0,41.4 60.6,40.3 62.2,39.2 63.8,38.2 65.5,37.2 67.2,36.2 69.0,35.2 70.7,34.3 72.5,33.4 74.3,32.5 76.1,31.6 78.0,30.8 79.9,30.0 81.8,29.3 83.7,28.5 85.6,27.8 87.6,27.2 89.6,26.5 91.6,25.9 93.6,25.3 95.6,24.8 97.7,24.3 99.7,23.8 101.8,23.3 103.9,22.9 106.0,22.5 108.1,22.2 110.2,21.9 112.3,21.6 114.5,21.3 116.6,21.1 118.7,20.9 120.9,20.8 123.0,20.7 125.2,20.6 127.3,20.5 129.5,20.5 131.7,20.5 133.8,20.6 136.0,20.7 138.1,20.8 140.3,20.9 142.4,21.1 144.5,21.3 146.7,21.6 148.8,21.9 150.9,22.2 153.0,22.5 155.1,22.9 157.2,23.3 159.3,23.8 161.3,24.3 163.4,24.8 165.4,25.3 167.4,25.9 169.4,26.5 171.4,27.2 173.4,27.8 175.3,28.5 177.2,29.3 179.1,30.0 181.0,30.8 182.9,31.6 184.7,32.5 186.5,33.4 188.3,34.3 190.0,35.2 191.8,36.2 193.5,37.2 195.2,38.2 196.8,39.2 198.4,40.3 200.0,41.4 201.6,42.5 203.1,43.6 204.6,44.8 206.0,46.0 207.5,47.2 208.9,48.4 210.2,49.7 211.5,50.9 212.8,52.2 214.1,53.6 215.3,54.9 216.5,56.2 217.6,57.6 218.7,59.0 219.8,60.4 220.8,61.8 221.8,63.3 222.7,64.7 223.6,66.2 224.5,67.7 225.3,69.2 226.0,70.7 226.8,72.2 227.5,73.7 228.1,75.2 228.7,76.8 229.3,78.4 229.8,79.9 230.2,81.5 230.7,83.1 231.1,84.7 231.4,86.3 231.7,87.8 231.9,89.5 232.1,91.1 232.3,92.7 232.4,94.3 232.5,95.9" fill="url(#bs)"/>
<polygon points="230.5,103.5 230.5,105.0 230.4,106.5 230.3,108.0 230.1,109.5 229.9,111.0 229.7,112.5 229.4,114.0 229.1,115.5 228.7,117.0 228.3,118.5 227.8,119.9 227.3,121.4 226.8,122.9 226.2,124.3 225.6,125.7 224.9,127.2 224.2,128.6 223.4,130.0 222.6,131.4 221.8,132.8 220.9,134.2 220.0,135.5 219.0,136.9 218.0,138.2 217.0,139.5 215.9,140.8 214.8,142.1 213.6,143.3 212.4,144.6 211.2,145.8 209.9,147.0 208.7,148.2 207.3,149.4 206.0,150.5 204.6,151.7 203.1,152.8 201.7,153.9 200.2,154.9 198.6,156.0 197.1,157.0 195.5,158.0 193.9,159.0 192.2,159.9 190.6,160.9 188.9,161.7 187.1,162.6 185.4,163.5 183.6,164.3 181.8,165.1 180.0,165.9 178.2,166.6 176.3,167.3 174.4,168.0 172.5,168.6 170.6,169.3 168.6,169.9 166.7,170.4 164.7,171.0 162.7,171.5 160.7,172.0 158.7,172.4 156.7,172.8 154.6,173.2 152.6,173.6 150.5,173.9 148.4,174.2 146.3,174.5 144.3,174.7 142.2,174.9 140.1,175.1 138.0,175.2 135.8,175.4 133.7,175.4 131.6,175.5 129.5,175.5 127.4,175.5 125.3,175.4 123.2,175.4 121.0,175.2 118.9,175.1 116.8,174.9 114.7,174.7 112.7,174.5 110.6,174.2 108.5,173.9 106.4,173.6 104.4,173.2 102.3,172.8 100.3,172.4 98.3,172.0 96.3,171.5 94.3,171.0 92.3,170.4 90.4,169.9 88.4,169.3 86.5,168.6 84.6,168.0 82.7,167.3 80.8,166.6 79.0,165.9 77.2,165.1 75.4,164.3 73.6,163.5 71.9,162.6 70.1,161.7 68.4,160.9 66.8,159.9 65.1,159.0 63.5,158.0 61.9,157.0 60.4,156.0 58.8,154.9 57.3,153.9 55.9,152.8 54.4,151.7 53.0,150.5 51.7,149.4 50.3,148.2 49.1,147.0 47.8,145.8 46.6,144.6 45.4,143.3 44.2,142.1 43.1,140.8 42.0,139.5 41.0,138.2 40.0,136.9 39.0,135.5 38.1,134.2 37.2,132.8 36.4,131.4 35.6,130.0 34.8,128.6 34.1,127.2 33.4,125.7 32.8,124.3 32.2,122.9 31.7,121.4 31.2,119.9 30.7,118.5 30.3,117.0 29.9,115.5 29.6,114.0 29.3,112.5 29.1,111.0 28.9,109.5 28.7,108.0 28.6,106.5 28.5,105.0 28.5,103.5 28.5,102.0 28.6,100.5 28.7,99.0 28.9,97.5 29.1,96.0 29.3,94.5 29.6,93.0 29.9,91.5 30.3,90.0 30.7,88.5 31.2,87.1 31.7,85.6 32.2,84.1 32.8,82.7 33.4,81.3 34.1,79.8 34.8,78.4 35.6,77.0 36.4,75.6 37.2,74.2 38.1,72.8 39.0,71.5 40.0,70.1 41.0,68.8 42.0,67.5 43.1,66.2 44.2,64.9 45.4,63.7 46.6,62.4 47.8,61.2 49.1,60.0 50.3,58.8 51.7,57.6 53.0,56.5 54.4,55.3 55.9,54.2 57.3,53.1 58.8,52.1 60.4,51.0 61.9,50.0 63.5,49.0 65.1,48.0 66.8,47.1 68.4,46.1 70.1,45.3 71.9,44.4 73.6,43.5 75.4,42.7 77.2,41.9 79.0,41.1 80.8,40.4 82.7,39.7 84.6,39.0 86.5,38.4 88.4,37.7 90.4,37.1 92.3,36.6 94.3,36.0 96.3,35.5 98.3,35.0 100.3,34.6 102.3,34.2 104.4,33.8 106.4,33.4 108.5,33.1 110.6,32.8 112.7,32.5 114.7,32.3 116.8,32.1 118.9,31.9 121.0,31.8 123.2,31.6 125.3,31.6 127.4,31.5 129.5,31.5 131.6,31.5 133.7,31.6 135.8,31.6 138.0,31.8 140.1,31.9 142.2,32.1 144.3,32.3 146.3,32.5 148.4,32.8 150.5,33.1 152.6,33.4 154.6,33.8 156.7,34.2 158.7,34.6 160.7,35.0 162.7,35.5 164.7,36.0 166.7,36.6 168.6,37.1 170.6,37.7 172.5,38.4 174.4,39.0 176.3,39.7 178.2,40.4 180.0,41.1 181.8,41.9 183.6,42.7 185.4,43.5 187.1,44.4 188.9,45.3 190.6,46.1 192.2,47.1 193.9,48.0 195.5,49.0 197.1,50.0 198.6,51.0 200.2,52.1 201.7,53.1 203.1,54.2 204.6,55.3 206.0,56.5 207.3,57.6 208.7,58.8 209.9,60.0 211.2,61.2 212.4,62.4 213.6,63.7 214.8,64.9 215.9,66.2 217.0,67.5 218.0,68.8 219.0,70.1 220.0,71.5 220.9,72.8 221.8,74.2 222.6,75.6 223.4,77.0 224.2,78.4 224.9,79.8 225.6,81.3 226.2,82.7 226.8,84.1 227.3,85.6 227.8,87.1 228.3,88.5 228.7,90.0 229.1,91.5 229.4,93.0 229.7,94.5 229.9,96.0 230.1,97.5 230.3,99.0 230.4,100.5 230.5,102.0" fill="#2a2a2a"/>
<polygon points="125.0,201.0 125.0,201.8 117.7,202.3 117.5,202.9 124.4,204.1 124.1,204.9 116.7,204.8 116.3,205.4 122.6,207.2 122.0,207.9 114.7,207.2 114.1,207.8 119.6,210.0 118.7,210.7 111.9,209.5 111.0,210.0 115.6,212.6 114.5,213.2 108.2,211.4 107.2,211.9 110.7,214.8 109.4,215.3 103.8,213.1 102.6,213.4 105.0,216.6 103.5,217.0 98.9,214.4 97.6,214.6 98.7,217.9 97.0,218.2 93.5,215.3 92.1,215.4 91.9,218.7 90.2,218.8 87.9,215.7 86.4,215.7 85.0,219.0 83.3,219.0 82.1,215.7 80.7,215.6 78.1,218.7 76.3,218.6 76.5,215.3 75.1,215.1 71.3,217.9 69.7,217.6 71.1,214.4 69.9,214.1 65.0,216.6 63.5,216.2 66.2,213.1 65.0,212.7 59.3,214.8 58.0,214.3 61.8,211.4 60.8,211.0 54.4,212.6 53.3,212.0 58.1,209.5 57.3,208.9 50.4,210.0 49.5,209.3 55.3,207.2 54.7,206.6 47.4,207.2 46.9,206.4 53.3,204.8 53.0,204.2 45.6,204.1 45.3,203.3 52.3,202.3 52.2,201.6 45.0,201.0 45.0,200.2 52.3,199.7 52.5,199.1 45.6,197.9 45.9,197.1 53.3,197.2 53.7,196.6 47.4,194.8 48.0,194.1 55.3,194.8 55.9,194.2 50.4,192.0 51.3,191.3 58.1,192.5 59.0,192.0 54.4,189.4 55.5,188.8 61.8,190.6 62.8,190.1 59.3,187.2 60.6,186.7 66.2,188.9 67.4,188.6 65.0,185.4 66.5,185.0 71.1,187.6 72.4,187.4 71.3,184.1 73.0,183.8 76.5,186.7 77.9,186.6 78.1,183.3 79.8,183.2 82.1,186.3 83.6,186.3 85.0,183.0 86.7,183.0 87.9,186.3 89.3,186.4 91.9,183.3 93.7,183.4 93.5,186.7 94.9,186.9 98.7,184.1 100.3,184.4 98.9,187.6 100.1,187.9 105.0,185.4 106.5,185.8 103.8,188.9 105.0,189.3 110.7,187.2 112.0,187.7 108.2,190.6 109.2,191.0 115.6,189.4 116.7,190.0 111.9,192.5 112.7,193.1 119.6,192.0 120.5,192.7 114.7,194.8 115.3,195.4 122.6,194.8 123.1,195.6 116.7,197.2 117.0,197.8 124.4,197.9 124.7,198.7 117.7,199.7 117.8,200.4" fill="url(#rs)"/>
<polygon points="125.0,197.0 125.0,198.0 118.1,198.6 118.0,199.4 124.4,200.8 124.0,201.8 117.1,201.8 116.6,202.6 122.5,204.5 121.8,205.4 115.0,204.8 114.3,205.5 119.4,208.0 118.4,208.8 111.9,207.6 111.0,208.2 115.2,211.1 114.0,211.9 107.9,210.1 106.8,210.6 110.0,213.9 108.6,214.5 103.2,212.1 102.0,212.6 104.0,216.1 102.4,216.5 97.9,213.7 96.5,214.1 97.4,217.7 95.6,218.0 92.1,214.9 90.6,215.0 90.3,218.7 88.5,218.8 86.1,215.4 84.5,215.5 83.0,219.0 81.2,219.0 79.9,215.4 78.4,215.3 75.7,218.7 73.9,218.5 73.9,214.9 72.4,214.6 68.6,217.7 66.9,217.3 68.1,213.7 66.7,213.4 62.0,216.1 60.4,215.6 62.8,212.1 61.5,211.7 56.0,213.9 54.6,213.2 58.1,210.1 57.0,209.5 50.8,211.1 49.7,210.4 54.1,207.6 53.2,206.9 46.6,208.0 45.7,207.2 51.0,204.8 50.4,204.1 43.5,204.5 42.9,203.6 48.9,201.8 48.6,201.0 41.6,200.8 41.4,199.9 47.9,198.6 47.8,197.8 41.0,197.0 41.0,196.0 47.9,195.4 48.0,194.6 41.6,193.2 42.0,192.2 48.9,192.2 49.4,191.4 43.5,189.5 44.2,188.6 51.0,189.2 51.7,188.5 46.6,186.0 47.6,185.2 54.1,186.4 55.0,185.8 50.8,182.9 52.0,182.1 58.1,183.9 59.2,183.4 56.0,180.1 57.4,179.5 62.8,181.9 64.0,181.4 62.0,177.9 63.6,177.5 68.1,180.3 69.5,179.9 68.6,176.3 70.4,176.0 73.9,179.1 75.4,179.0 75.7,175.3 77.5,175.2 79.9,178.6 81.5,178.5 83.0,175.0 84.8,175.0 86.1,178.6 87.6,178.7 90.3,175.3 92.1,175.5 92.1,179.1 93.6,179.4 97.4,176.3 99.1,176.7 97.9,180.3 99.3,180.6 104.0,177.9 105.6,178.4 103.2,181.9 104.5,182.3 110.0,180.1 111.4,180.8 107.9,183.9 109.0,184.5 115.2,182.9 116.3,183.6 111.9,186.4 112.8,187.1 119.4,186.0 120.3,186.8 115.0,189.2 115.6,189.9 122.5,189.5 123.1,190.4 117.1,192.2 117.4,193.0 124.4,193.2 124.6,194.1 118.1,195.4 118.2,196.2" fill="url(#rs)"/>
<polygon points="117.0,159.0 116.9,160.7 112.4,162.0 111.9,163.5 115.2,165.8 114.2,167.5 109.3,167.6 108.1,168.9 110.0,171.9 108.2,173.1 103.6,172.2 101.8,173.1 102.0,176.3 99.7,177.1 95.8,175.2 93.7,175.6 92.2,178.7 89.6,178.9 87.0,176.2 84.8,176.1 81.8,178.7 79.2,178.3 78.2,175.2 76.1,174.6 72.0,176.3 69.8,175.4 70.4,172.2 68.8,171.2 64.0,171.9 62.4,170.5 64.7,167.6 63.6,166.3 58.8,165.8 58.0,164.2 61.6,162.0 61.3,160.5 57.0,159.0 57.1,157.3 61.6,156.0 62.1,154.5 58.8,152.2 59.8,150.5 64.7,150.4 65.9,149.1 64.0,146.1 65.8,144.9 70.4,145.8 72.2,144.9 72.0,141.7 74.3,140.9 78.2,142.8 80.3,142.4 81.8,139.3 84.4,139.1 87.0,141.8 89.2,141.9 92.2,139.3 94.8,139.7 95.8,142.8 97.9,143.4 102.0,141.7 104.2,142.6 103.6,145.8 105.2,146.8 110.0,146.1 111.6,147.5 109.3,150.4 110.4,151.7 115.2,152.2 116.0,153.8 112.4,156.0 112.7,157.5" fill="url(#rs)"/>
<polygon points="116.7,151.3 116.6,153.1 112.1,154.4 111.6,156.0 114.9,158.5 113.9,160.2 109.0,160.3 107.8,161.7 109.7,164.8 107.9,166.1 103.3,165.1 101.5,166.1 101.7,169.5 99.4,170.3 95.5,168.3 93.4,168.7 91.9,172.0 89.3,172.2 86.7,169.4 84.5,169.3 81.5,172.0 78.9,171.6 77.9,168.3 75.8,167.7 71.7,169.5 69.5,168.5 70.1,165.1 68.5,164.1 63.7,164.8 62.1,163.3 64.4,160.3 63.3,158.9 58.5,158.5 57.7,156.7 61.3,154.4 61.0,152.9 56.7,151.3 56.8,149.5 61.3,148.2 61.8,146.6 58.5,144.1 59.5,142.4 64.4,142.3 65.6,140.9 63.7,137.8 65.5,136.5 70.1,137.5 71.9,136.5 71.7,133.1 74.0,132.3 77.9,134.3 80.0,133.9 81.5,130.6 84.1,130.4 86.7,133.2 88.9,133.3 91.9,130.6 94.5,131.0 95.5,134.3 97.6,134.9 101.7,133.1 103.9,134.1 103.3,137.5 104.9,138.5 109.7,137.8 111.3,139.3 109.0,142.3 110.1,143.7 114.9,144.1 115.7,145.9 112.1,148.2 112.4,149.7" fill="#ff0000"/>
<polygon points="186,232 196,236 204,241 211,250 216,262 214,270 190,270" transform="translate(-72 -95)" fill="#ff0000"/>
<rect x="113.5" y="137.0" width="4" height="38" fill="#8a0000"/>
<polygon points="257.0,136.0 257.0,137.6 250.6,138.8 250.4,140.1 256.2,142.3 255.8,143.8 249.2,144.2 248.6,145.5 253.9,148.3 253.0,149.8 246.5,149.4 245.6,150.6 250.0,154.0 248.9,155.3 242.5,154.2 241.3,155.3 244.8,159.1 243.3,160.3 237.4,158.4 235.9,159.4 238.4,163.6 236.7,164.6 231.2,162.0 229.6,162.7 231.0,167.2 229.0,167.9 224.3,164.7 222.5,165.3 222.8,169.8 220.6,170.3 216.8,166.6 214.9,166.9 214.0,171.5 211.8,171.7 209.0,167.6 207.0,167.6 205.0,172.0 202.7,172.0 201.0,167.6 199.0,167.4 196.0,171.5 193.7,171.1 193.2,166.6 191.2,166.2 187.2,169.8 185.1,169.3 185.7,164.7 183.9,164.1 179.0,167.2 177.1,166.4 178.8,162.0 177.1,161.1 171.6,163.6 169.9,162.5 172.6,158.4 171.3,157.4 165.2,159.1 163.7,157.9 167.5,154.2 166.4,153.0 160.0,154.0 158.9,152.6 163.5,149.4 162.7,148.1 156.1,148.3 155.4,146.8 160.8,144.2 160.3,142.9 153.8,142.3 153.4,140.7 159.4,138.8 159.3,137.4 153.0,136.0 153.0,134.4 159.4,133.2 159.6,131.9 153.8,129.7 154.2,128.2 160.8,127.8 161.4,126.5 156.1,123.7 157.0,122.2 163.5,122.6 164.4,121.4 160.0,118.0 161.1,116.7 167.5,117.8 168.7,116.7 165.2,112.9 166.7,111.7 172.6,113.6 174.1,112.6 171.6,108.4 173.3,107.4 178.8,110.0 180.4,109.3 179.0,104.8 181.0,104.1 185.7,107.3 187.5,106.7 187.2,102.2 189.4,101.7 193.2,105.4 195.1,105.1 196.0,100.5 198.2,100.3 201.0,104.4 203.0,104.4 205.0,100.0 207.3,100.0 209.0,104.4 211.0,104.6 214.0,100.5 216.3,100.9 216.8,105.4 218.8,105.8 222.8,102.2 224.9,102.7 224.3,107.3 226.1,107.9 231.0,104.8 232.9,105.6 231.2,110.0 232.9,110.9 238.4,108.4 240.1,109.5 237.4,113.6 238.7,114.6 244.8,112.9 246.3,114.1 242.5,117.8 243.6,119.0 250.0,118.0 251.1,119.4 246.5,122.6 247.3,123.9 253.9,123.7 254.6,125.2 249.2,127.8 249.7,129.1 256.2,129.7 256.6,131.3 250.6,133.2 250.7,134.6" fill="url(#rs)"/><rect x="155.6" y="122.0" width="98.8" height="14.0" fill="url(#rs)"/><polygon points="257.0,122.0 257.0,123.6 250.6,124.8 250.4,126.1 256.2,128.3 255.8,129.8 249.2,130.2 248.6,131.5 253.9,134.3 253.0,135.8 246.5,135.4 245.6,136.6 250.0,140.0 248.9,141.3 242.5,140.2 241.3,141.3 244.8,145.1 243.3,146.3 237.4,144.4 235.9,145.4 238.4,149.6 236.7,150.6 231.2,148.0 229.6,148.7 231.0,153.2 229.0,153.9 224.3,150.7 222.5,151.3 222.8,155.8 220.6,156.3 216.8,152.6 214.9,152.9 214.0,157.5 211.8,157.7 209.0,153.6 207.0,153.6 205.0,158.0 202.7,158.0 201.0,153.6 199.0,153.4 196.0,157.5 193.7,157.1 193.2,152.6 191.2,152.2 187.2,155.8 185.1,155.3 185.7,150.7 183.9,150.1 179.0,153.2 177.1,152.4 178.8,148.0 177.1,147.1 171.6,149.6 169.9,148.5 172.6,144.4 171.3,143.4 165.2,145.1 163.7,143.9 167.5,140.2 166.4,139.0 160.0,140.0 158.9,138.6 163.5,135.4 162.7,134.1 156.1,134.3 155.4,132.8 160.8,130.2 160.3,128.9 153.8,128.3 153.4,126.7 159.4,124.8 159.3,123.4 153.0,122.0 153.0,120.4 159.4,119.2 159.6,117.9 153.8,115.7 154.2,114.2 160.8,113.8 161.4,112.5 156.1,109.7 157.0,108.2 163.5,108.6 164.4,107.4 160.0,104.0 161.1,102.7 167.5,103.8 168.7,102.7 165.2,98.9 166.7,97.7 172.6,99.6 174.1,98.6 171.6,94.4 173.3,93.4 178.8,96.0 180.4,95.3 179.0,90.8 181.0,90.1 185.7,93.3 187.5,92.7 187.2,88.2 189.4,87.7 193.2,91.4 195.1,91.1 196.0,86.5 198.2,86.3 201.0,90.4 203.0,90.4 205.0,86.0 207.3,86.0 209.0,90.4 211.0,90.6 214.0,86.5 216.3,86.9 216.8,91.4 218.8,91.8 222.8,88.2 224.9,88.7 224.3,93.3 226.1,93.9 231.0,90.8 232.9,91.6 231.2,96.0 232.9,96.9 238.4,94.4 240.1,95.5 237.4,99.6 238.7,100.6 244.8,98.9 246.3,100.1 242.5,103.8 243.6,105.0 250.0,104.0 251.1,105.4 246.5,108.6 247.3,109.9 253.9,109.7 254.6,111.2 249.2,113.8 249.7,115.1 256.2,115.7 256.6,117.3 250.6,119.2 250.7,120.6" fill="#ff0000"/>
<polygon points="233.5,112.6 233.4,114.3 229.9,115.5 229.5,116.9 231.9,119.1 231.0,120.6 227.1,121.0 226.0,122.2 227.2,124.8 225.6,126.0 221.8,125.4 220.1,126.3 220.0,129.1 217.9,129.8 214.6,128.3 212.6,128.8 211.2,131.3 208.9,131.5 206.5,129.3 204.4,129.3 201.8,131.3 199.5,131.0 198.4,128.3 196.5,127.8 193.0,129.1 191.0,128.2 191.2,125.4 189.7,124.4 185.8,124.8 184.4,123.5 185.9,121.0 185.0,119.7 181.1,119.1 180.4,117.5 183.1,115.5 182.8,114.1 179.5,112.6 179.6,110.9 183.1,109.7 183.5,108.3 181.1,106.1 182.0,104.6 185.9,104.2 187.0,103.0 185.8,100.4 187.4,99.2 191.2,99.8 192.9,98.9 193.0,96.1 195.1,95.4 198.4,96.9 200.4,96.4 201.8,93.9 204.1,93.7 206.5,95.9 208.6,95.9 211.2,93.9 213.5,94.2 214.6,96.9 216.5,97.4 220.0,96.1 222.0,97.0 221.8,99.8 223.3,100.8 227.2,100.4 228.6,101.7 227.1,104.2 228.0,105.5 231.9,106.1 232.6,107.7 229.9,109.7 230.2,111.1" fill="url(#rs)"/><rect x="180.8" y="94.6" width="51.3" height="18.0" fill="url(#rs)"/><polygon points="233.5,94.6 233.4,96.3 229.9,97.5 229.5,98.9 231.9,101.1 231.0,102.6 227.1,103.0 226.0,104.2 227.2,106.8 225.6,108.0 221.8,107.4 220.1,108.3 220.0,111.1 217.9,111.8 214.6,110.3 212.6,110.8 211.2,113.3 208.9,113.5 206.5,111.3 204.4,111.3 201.8,113.3 199.5,113.0 198.4,110.3 196.5,109.8 193.0,111.1 191.0,110.2 191.2,107.4 189.7,106.4 185.8,106.8 184.4,105.5 185.9,103.0 185.0,101.7 181.1,101.1 180.4,99.5 183.1,97.5 182.8,96.1 179.5,94.6 179.6,92.9 183.1,91.7 183.5,90.3 181.1,88.1 182.0,86.6 185.9,86.2 187.0,85.0 185.8,82.4 187.4,81.2 191.2,81.8 192.9,80.9 193.0,78.1 195.1,77.4 198.4,78.9 200.4,78.4 201.8,75.9 204.1,75.7 206.5,77.9 208.6,77.9 211.2,75.9 213.5,76.2 214.6,78.9 216.5,79.4 220.0,78.1 222.0,79.0 221.8,81.8 223.3,82.8 227.2,82.4 228.6,83.7 227.1,86.2 228.0,87.5 231.9,88.1 232.6,89.7 229.9,91.7 230.2,93.1" fill="#ff0000"/>
<polygon points="146.2,84.5 146.2,85.9 140.0,87.0 139.8,88.3 145.4,90.2 145.0,91.6 138.6,92.0 138.1,93.2 143.2,95.8 142.4,97.1 136.0,96.8 135.1,97.9 139.4,101.0 138.3,102.2 132.1,101.2 131.0,102.2 134.4,105.7 132.9,106.8 127.1,105.0 125.7,105.9 128.2,109.8 126.4,110.7 121.2,108.3 119.6,109.0 120.9,113.1 119.0,113.8 114.5,110.8 112.7,111.3 113.0,115.5 110.9,116.0 107.2,112.6 105.3,112.9 104.5,117.0 102.3,117.2 99.6,113.4 97.6,113.5 95.7,117.5 93.5,117.5 91.8,113.4 89.9,113.3 86.9,117.0 84.8,116.7 84.2,112.6 82.3,112.2 78.4,115.5 76.4,115.0 76.9,110.8 75.2,110.3 70.5,113.1 68.6,112.3 70.2,108.3 68.6,107.5 63.2,109.8 61.6,108.8 64.3,105.0 62.9,104.1 57.0,105.7 55.6,104.6 59.3,101.2 58.2,100.1 52.0,101.0 50.9,99.7 55.4,96.8 54.6,95.6 48.2,95.8 47.5,94.4 52.8,92.0 52.3,90.8 46.0,90.2 45.6,88.8 51.4,87.0 51.3,85.8 45.2,84.5 45.2,83.1 51.4,82.0 51.6,80.7 46.0,78.8 46.4,77.4 52.8,77.0 53.3,75.8 48.2,73.2 49.0,71.9 55.4,72.2 56.3,71.1 52.0,68.0 53.1,66.8 59.3,67.8 60.4,66.8 57.0,63.3 58.5,62.2 64.3,64.0 65.7,63.1 63.2,59.2 65.0,58.3 70.2,60.7 71.8,60.0 70.4,55.9 72.4,55.2 76.9,58.2 78.7,57.7 78.4,53.5 80.5,53.0 84.2,56.4 86.1,56.1 86.9,52.0 89.1,51.8 91.8,55.6 93.8,55.5 95.7,51.5 97.9,51.5 99.6,55.6 101.5,55.7 104.5,52.0 106.6,52.3 107.2,56.4 109.1,56.8 113.0,53.5 115.0,54.0 114.5,58.2 116.2,58.7 120.9,55.9 122.8,56.7 121.2,60.7 122.8,61.5 128.2,59.2 129.8,60.2 127.1,64.0 128.5,64.9 134.4,63.3 135.8,64.4 132.1,67.8 133.2,68.9 139.4,68.0 140.5,69.3 136.0,72.2 136.8,73.4 143.2,73.2 143.9,74.6 138.6,77.0 139.1,78.2 145.4,78.8 145.8,80.2 140.0,82.0 140.1,83.2" fill="url(#rs)"/><rect x="47.7" y="72.5" width="95.9" height="12.0" fill="url(#rs)"/><polygon points="146.2,72.5 146.2,73.9 140.0,75.0 139.8,76.3 145.4,78.2 145.0,79.6 138.6,80.0 138.1,81.2 143.2,83.8 142.4,85.1 136.0,84.8 135.1,85.9 139.4,89.0 138.3,90.2 132.1,89.2 131.0,90.2 134.4,93.7 132.9,94.8 127.1,93.0 125.7,93.9 128.2,97.8 126.4,98.7 121.2,96.3 119.6,97.0 120.9,101.1 119.0,101.8 114.5,98.8 112.7,99.3 113.0,103.5 110.9,104.0 107.2,100.6 105.3,100.9 104.5,105.0 102.3,105.2 99.6,101.4 97.6,101.5 95.7,105.5 93.5,105.5 91.8,101.4 89.9,101.3 86.9,105.0 84.8,104.7 84.2,100.6 82.3,100.2 78.4,103.5 76.4,103.0 76.9,98.8 75.2,98.3 70.5,101.1 68.6,100.3 70.2,96.3 68.6,95.5 63.2,97.8 61.6,96.8 64.3,93.0 62.9,92.1 57.0,93.7 55.6,92.6 59.3,89.2 58.2,88.1 52.0,89.0 50.9,87.7 55.4,84.8 54.6,83.6 48.2,83.8 47.5,82.4 52.8,80.0 52.3,78.8 46.0,78.2 45.6,76.8 51.4,75.0 51.3,73.8 45.2,72.5 45.2,71.1 51.4,70.0 51.6,68.7 46.0,66.8 46.4,65.4 52.8,65.0 53.3,63.8 48.2,61.2 49.0,59.9 55.4,60.2 56.3,59.1 52.0,56.0 53.1,54.8 59.3,55.8 60.4,54.8 57.0,51.3 58.5,50.2 64.3,52.0 65.7,51.1 63.2,47.2 65.0,46.3 70.2,48.7 71.8,48.0 70.4,43.9 72.4,43.2 76.9,46.2 78.7,45.7 78.4,41.5 80.5,41.0 84.2,44.4 86.1,44.1 86.9,40.0 89.1,39.8 91.8,43.6 93.8,43.5 95.7,39.5 97.9,39.5 99.6,43.6 101.5,43.7 104.5,40.0 106.6,40.3 107.2,44.4 109.1,44.8 113.0,41.5 115.0,42.0 114.5,46.2 116.2,46.7 120.9,43.9 122.8,44.7 121.2,48.7 122.8,49.5 128.2,47.2 129.8,48.2 127.1,52.0 128.5,52.9 134.4,51.3 135.8,52.4 132.1,55.8 133.2,56.9 139.4,56.0 140.5,57.3 136.0,60.2 136.8,61.4 143.2,61.2 143.9,62.6 138.6,65.0 139.1,66.2 145.4,66.8 145.8,68.2 140.0,70.0 140.1,71.2" fill="#ff0000"/>
<polygon points="119.0,66.3 118.9,67.9 115.5,69.1 115.1,70.4 117.4,72.5 116.6,73.9 112.8,74.2 111.7,75.4 112.9,77.9 111.4,79.0 107.7,78.4 106.1,79.3 106.0,81.9 104.0,82.6 100.8,81.2 98.9,81.6 97.5,84.0 95.3,84.2 93.0,82.1 91.0,82.1 88.5,84.0 86.3,83.7 85.2,81.2 83.3,80.7 80.0,81.9 78.1,81.0 78.3,78.4 76.8,77.5 73.1,77.9 71.7,76.6 73.2,74.2 72.3,73.0 68.6,72.5 67.9,71.0 70.5,69.1 70.2,67.7 67.0,66.3 67.1,64.7 70.5,63.5 70.9,62.2 68.6,60.1 69.4,58.7 73.2,58.4 74.3,57.2 73.1,54.7 74.6,53.6 78.3,54.2 79.9,53.3 80.0,50.7 82.0,50.0 85.2,51.4 87.1,51.0 88.5,48.6 90.7,48.4 93.0,50.5 95.0,50.5 97.5,48.6 99.7,48.9 100.8,51.4 102.7,51.9 106.0,50.7 107.9,51.6 107.7,54.2 109.2,55.1 112.9,54.7 114.3,56.0 112.8,58.4 113.7,59.6 117.4,60.1 118.1,61.6 115.5,63.5 115.8,64.9" fill="url(#rs)"/><rect x="68.3" y="47.3" width="49.4" height="19.0" fill="url(#rs)"/><polygon points="119.0,47.3 118.9,48.9 115.5,50.1 115.1,51.4 117.4,53.5 116.6,54.9 112.8,55.2 111.7,56.4 112.9,58.9 111.4,60.0 107.7,59.4 106.1,60.3 106.0,62.9 104.0,63.6 100.8,62.2 98.9,62.6 97.5,65.0 95.3,65.2 93.0,63.1 91.0,63.1 88.5,65.0 86.3,64.7 85.2,62.2 83.3,61.7 80.0,62.9 78.1,62.0 78.3,59.4 76.8,58.5 73.1,58.9 71.7,57.6 73.2,55.2 72.3,54.0 68.6,53.5 67.9,52.0 70.5,50.1 70.2,48.7 67.0,47.3 67.1,45.7 70.5,44.5 70.9,43.2 68.6,41.1 69.4,39.7 73.2,39.4 74.3,38.2 73.1,35.7 74.6,34.6 78.3,35.2 79.9,34.3 80.0,31.7 82.0,31.0 85.2,32.4 87.1,32.0 88.5,29.6 90.7,29.4 93.0,31.5 95.0,31.5 97.5,29.6 99.7,29.9 100.8,32.4 102.7,32.9 106.0,31.7 107.9,32.6 107.7,35.2 109.2,36.1 112.9,35.7 114.3,37.0 112.8,39.4 113.7,40.6 117.4,41.1 118.1,42.6 115.5,44.5 115.8,45.9" fill="#ff0000"/>
<polygon points="161.8,126.8 161.7,128.4 158.0,129.6 157.6,130.9 160.5,133.0 159.8,134.5 155.7,134.8 154.8,136.0 156.7,138.6 155.4,139.9 151.4,139.4 150.0,140.3 150.7,143.2 149.0,144.2 145.3,142.8 143.6,143.4 143.1,146.3 141.1,146.9 138.2,144.8 136.3,145.1 134.6,147.7 132.4,147.8 130.5,145.2 128.5,145.1 125.9,147.3 123.7,146.9 122.9,144.0 121.2,143.4 117.7,145.0 115.8,144.2 116.3,141.2 114.8,140.3 110.8,141.1 109.4,139.9 111.0,137.2 110.0,136.0 105.9,135.9 105.0,134.5 107.7,132.2 107.2,130.9 103.3,129.9 103.1,128.4 106.5,126.8 106.6,125.4 103.3,123.7 103.7,122.1 107.7,121.4 108.3,120.0 105.9,117.7 106.9,116.3 111.0,116.4 112.2,115.3 110.8,112.5 112.4,111.4 116.3,112.4 117.8,111.5 117.7,108.6 119.6,107.9 122.9,109.6 124.8,109.1 125.9,106.3 128.0,106.0 130.5,108.4 132.4,108.3 134.6,105.9 136.8,106.0 138.2,108.8 140.0,109.1 143.1,107.3 145.2,107.9 145.3,110.8 147.0,111.5 150.7,110.4 152.4,111.4 151.4,114.2 152.6,115.3 156.7,115.0 157.9,116.3 155.7,118.8 156.5,120.0 160.5,120.6 161.1,122.1 158.0,124.0 158.2,125.4" fill="url(#bs)"/><rect x="104.5" y="118.8" width="55.9" height="8.0" fill="url(#bs)"/><polygon points="161.8,118.8 161.7,120.4 158.0,121.6 157.6,122.9 160.5,125.0 159.8,126.5 155.7,126.8 154.8,128.0 156.7,130.6 155.4,131.9 151.4,131.4 150.0,132.3 150.7,135.2 149.0,136.2 145.3,134.8 143.6,135.4 143.1,138.3 141.1,138.9 138.2,136.8 136.3,137.1 134.6,139.7 132.4,139.8 130.5,137.2 128.5,137.1 125.9,139.3 123.7,138.9 122.9,136.0 121.2,135.4 117.7,137.0 115.8,136.2 116.3,133.2 114.8,132.3 110.8,133.1 109.4,131.9 111.0,129.2 110.0,128.0 105.9,127.9 105.0,126.5 107.7,124.2 107.2,122.9 103.3,121.9 103.1,120.4 106.5,118.8 106.6,117.4 103.3,115.7 103.7,114.1 107.7,113.4 108.3,112.0 105.9,109.7 106.9,108.3 111.0,108.4 112.2,107.3 110.8,104.5 112.4,103.4 116.3,104.4 117.8,103.5 117.7,100.6 119.6,99.9 122.9,101.6 124.8,101.1 125.9,98.3 128.0,98.0 130.5,100.4 132.4,100.3 134.6,97.9 136.8,98.0 138.2,100.8 140.0,101.1 143.1,99.3 145.2,99.9 145.3,102.8 147.0,103.5 150.7,102.4 152.4,103.4 151.4,106.2 152.6,107.3 156.7,107.0 157.9,108.3 155.7,110.8 156.5,112.0 160.5,112.6 161.1,114.1 158.0,116.0 158.2,117.4" fill="#00d8f8"/>
<clipPath id="sc"><path d="M6.4,110.7 a125.0,93.5 0 1,0 250.0,0 a125.0,93.5 0 1,0 -250.0,0Z M6.4,96.7 a125.0,93.5 0 1,0 250.0,0 a125.0,93.5 0 1,0 -250.0,0Z" clip-rule="evenodd"/></clipPath>
<g clip-path="url(#sc)"><rect width="273" height="227" fill="#38307a"/><rect x="93.5" y="0" width="59" height="227" fill="#2a0860"/><rect x="198.6" y="0" width="43" height="227" fill="#3a32a0"/></g>
<path d="M6.4,96.7 a125.0,93.5 0 1,0 250.0,0 a125.0,93.5 0 1,0 -250.0,0Z M232.5,99.5 L232.5,101.1 L225.2,102.5 L225.1,104.0 L232.1,105.9 L231.9,107.5 L224.5,108.5 L224.3,110.0 L231.1,112.3 L230.7,113.9 L223.2,114.4 L222.8,115.9 L229.3,118.6 L228.7,120.2 L221.2,120.2 L220.6,121.6 L226.8,124.8 L226.0,126.3 L218.6,125.9 L217.8,127.2 L223.6,130.8 L222.7,132.3 L215.3,131.3 L214.4,132.7 L219.8,136.6 L218.7,138.0 L211.4,136.6 L210.4,137.9 L215.3,142.1 L214.1,143.4 L207.0,141.6 L205.8,142.8 L210.2,147.3 L208.9,148.6 L202.0,146.3 L200.7,147.4 L204.6,152.2 L203.1,153.4 L196.5,150.7 L195.1,151.7 L198.4,156.7 L196.8,157.8 L190.6,154.7 L189.0,155.6 L191.8,160.8 L190.0,161.8 L184.2,158.3 L182.5,159.1 L184.7,164.5 L182.9,165.4 L177.4,161.5 L175.6,162.3 L177.2,167.7 L175.3,168.5 L170.3,164.3 L168.5,164.9 L169.4,170.5 L167.4,171.1 L162.9,166.6 L161.0,167.1 L161.3,172.7 L159.3,173.2 L155.3,168.5 L153.3,168.9 L153.0,174.5 L150.9,174.8 L147.4,169.8 L145.5,170.1 L144.5,175.7 L142.4,175.9 L139.5,170.7 L137.5,170.9 L136.0,176.3 L133.8,176.4 L131.5,171.1 L129.5,171.1 L127.3,176.5 L125.2,176.4 L123.5,171.0 L121.5,170.9 L118.7,176.1 L116.6,175.9 L115.5,170.3 L113.5,170.1 L110.2,175.1 L108.1,174.8 L107.6,169.2 L105.7,168.9 L101.8,173.7 L99.7,173.2 L99.9,167.6 L98.0,167.1 L93.6,171.7 L91.6,171.1 L92.4,165.5 L90.5,164.9 L85.6,169.2 L83.7,168.5 L85.1,163.0 L83.4,162.3 L78.0,166.2 L76.1,165.4 L78.2,160.0 L76.5,159.1 L70.7,162.7 L69.0,161.8 L71.6,156.5 L70.0,155.6 L63.8,158.8 L62.2,157.8 L65.4,152.7 L63.9,151.7 L57.4,154.5 L55.9,153.4 L59.7,148.5 L58.3,147.4 L51.5,149.8 L50.1,148.6 L54.4,144.0 L53.2,142.8 L46.2,144.8 L44.9,143.4 L49.7,139.1 L48.6,137.9 L41.4,139.4 L40.3,138.0 L45.6,134.0 L44.6,132.7 L37.2,133.7 L36.3,132.3 L42.0,128.6 L41.2,127.2 L33.7,127.8 L33.0,126.3 L39.0,123.1 L38.4,121.6 L30.9,121.8 L30.3,120.2 L36.7,117.3 L36.2,115.9 L28.8,115.5 L28.3,113.9 L35.1,111.4 L34.7,110.0 L27.3,109.2 L27.1,107.5 L34.0,105.5 L33.9,104.0 L26.6,102.7 L26.5,101.1 L33.7,99.5 L33.7,98.0 L26.6,96.3 L26.7,94.7 L34.0,93.5 L34.2,92.0 L27.3,89.8 L27.6,88.3 L35.1,87.6 L35.4,86.1 L28.8,83.5 L29.2,81.9 L36.7,81.7 L37.2,80.2 L30.9,77.2 L31.5,75.7 L39.0,75.9 L39.7,74.5 L33.7,71.2 L34.5,69.7 L42.0,70.4 L42.8,69.0 L37.2,65.3 L38.2,63.8 L45.6,65.0 L46.5,63.7 L41.4,59.6 L42.5,58.2 L49.7,59.9 L50.8,58.6 L46.2,54.2 L47.5,52.9 L54.4,55.0 L55.7,53.9 L51.5,49.2 L53.0,48.0 L59.7,50.5 L61.1,49.4 L57.4,44.5 L59.0,43.4 L65.4,46.3 L66.9,45.3 L63.8,40.2 L65.5,39.2 L71.6,42.5 L73.2,41.6 L70.7,36.3 L72.5,35.4 L78.2,39.0 L79.9,38.2 L78.0,32.8 L79.9,32.0 L85.1,36.0 L86.9,35.4 L85.6,29.8 L87.6,29.2 L92.4,33.5 L94.2,32.9 L93.6,27.3 L95.6,26.8 L99.9,31.4 L101.8,30.9 L101.8,25.3 L103.9,24.9 L107.6,29.8 L109.6,29.5 L110.2,23.9 L112.3,23.6 L115.5,28.7 L117.5,28.5 L118.7,22.9 L120.9,22.8 L123.5,28.0 L125.5,28.0 L127.3,22.5 L129.5,22.5 L131.5,27.9 L133.5,28.0 L136.0,22.7 L138.1,22.8 L139.5,28.3 L141.5,28.5 L144.5,23.3 L146.7,23.6 L147.4,29.2 L149.4,29.5 L153.0,24.5 L155.1,24.9 L155.3,30.5 L157.2,30.9 L161.3,26.3 L163.4,26.8 L162.9,32.4 L164.8,32.9 L169.4,28.5 L171.4,29.2 L170.3,34.7 L172.1,35.4 L177.2,31.3 L179.1,32.0 L177.4,37.5 L179.1,38.2 L184.7,34.5 L186.5,35.4 L184.2,40.7 L185.8,41.6 L191.8,38.2 L193.5,39.2 L190.6,44.3 L192.1,45.3 L198.4,42.3 L200.0,43.4 L196.5,48.3 L197.9,49.4 L204.6,46.8 L206.0,48.0 L202.0,52.7 L203.3,53.9 L210.2,51.7 L211.5,52.9 L207.0,57.4 L208.2,58.6 L215.3,56.9 L216.5,58.2 L211.4,62.4 L212.5,63.7 L219.8,62.4 L220.8,63.8 L215.3,67.7 L216.2,69.0 L223.6,68.2 L224.5,69.7 L218.6,73.1 L219.3,74.5 L226.8,74.2 L227.5,75.7 L221.2,78.8 L221.8,80.2 L229.3,80.4 L229.8,81.9 L223.2,84.6 L223.6,86.1 L231.1,86.7 L231.4,88.3 L224.5,90.5 L224.8,92.0 L232.1,93.1 L232.3,94.7 L225.2,96.5 L225.3,98.0Z" fill="#9030f0" fill-rule="evenodd"/>
<text x="85.0" y="52.0" fill="#f0b020" font-size="14">Z3</text>
<text x="119.0" y="89.0" fill="#f0b020" font-size="14">Z2</text>
<text x="124.0" y="123.0" fill="#b8c040" font-size="14">Z1</text>
<text x="231.0" y="72.0" fill="#d0a050" font-size="14">Z4</text>
</svg>
</div>
<!-- group 1级 -->
<div class="grp" style="left:345px;top:102px;width:365px;height:93px"></div>
<div class="lbl t" style="left:351px;top:95px">1级</div>
<div class="t" style="left:353px;top:123px">太阳轮齿数<span class="m">Z1:</span></div>
<div class="cb" style="left:448px;top:120px;width:72px;height:21px"><span class="v">21</span><svg width="9" height="5"><path d="M0.5 0.5L4.5 4.5L8.5 0.5" stroke="#444" fill="none"/></svg></div>
<div class="t" style="left:555px;top:120px">模数<span class="m">:m1</span></div>
<div class="cb" style="left:600px;top:115px;width:104px;height:20px"><span class="v" style="top:1px">3</span><svg width="9" height="5"><path d="M0.5 0.5L4.5 4.5L8.5 0.5" stroke="#444" fill="none"/></svg></div>
<div class="t" style="left:353px;top:160px">行星轮齿数<span class="m"> Z2:</span></div>
<div class="cb" style="left:446px;top:157px;width:71px;height:20px"><span class="v">36</span><svg width="9" height="5"><path d="M0.5 0.5L4.5 4.5L8.5 0.5" stroke="#444" fill="none"/></svg></div>
<div class="chk" style="left:628px;top:158px"><svg width="11" height="11" style="position:absolute;left:0;top:0"><path d="M1.5 5.5L4.5 8.5L10 2" stroke="#222" fill="none" stroke-width="1.2"/></svg></div>
<div class="t" style="left:646px;top:158px">标准模数</div>
<!-- group 2级 -->
<div class="grp" style="left:345px;top:208px;width:365px;height:68px"></div>
<div class="lbl t" style="left:351px;top:201px">2级</div>
<div class="t" style="left:353px;top:222px">行星轮齿数<span class="m"> Z3:</span></div>
<div class="cb" style="left:448px;top:219px;width:73px;height:20px"><span class="v">18</span><svg width="9" height="5"><path d="M0.5 0.5L4.5 4.5L8.5 0.5" stroke="#444" fill="none"/></svg></div>
<div class="t" style="left:550px;top:222px">模数<span class="m">:m2</span></div>
<div class="cb" style="left:600px;top:219px;width:93px;height:20px"><span class="v">3</span><svg width="9" height="5"><path d="M0.5 0.5L4.5 4.5L8.5 0.5" stroke="#444" fill="none"/></svg></div>
<div class="chk" style="left:627px;top:248px"><svg width="11" height="11" style="position:absolute;left:0;top:0"><path d="M1.5 5.5L4.5 8.5L10 2" stroke="#222" fill="none" stroke-width="1.2"/></svg></div>
<div class="t" style="left:645px;top:248px">标准模数</div>
<!-- group 齿形选择 -->
<div class="grp" style="left:345px;top:290px;width:365px;height:72px"></div>
<div class="lbl t" style="left:352px;top:283px">齿形选择</div>
<div class="t" style="left:354px;top:310px">齿顶高系数<span class="m">: Ha*</span></div>
<div class="cb" style="left:463px;top:307px;width:65px;height:20px"><span class="v">1</span><svg width="9" height="5"><path d="M0.5 0.5L4.5 4.5L8.5 0.5" stroke="#444" fill="none"/></svg></div>
<div class="t" style="left:550px;top:310px">顶系系数<span class="m">:&nbsp;</span><span class="t m" style="left:61px;top:1px">c*</span></div>
<div class="cb" style="left:637px;top:307px;width:65px;height:20px"><span class="v">0.25</span><svg width="9" height="5"><path d="M0.5 0.5L4.5 4.5L8.5 0.5" stroke="#444" fill="none"/></svg></div>
<div class="t" style="left:354px;top:340px">压力角&nbsp;&nbsp;:<span class="t" style="left:67px;top:-1px">α</span></div>
<div class="cb" style="left:462px;top:337px;width:65px;height:20px"><span class="v">20</span><svg width="9" height="5"><path d="M0.5 0.5L4.5 4.5L8.5 0.5" stroke="#444" fill="none"/></svg></div>
<div class="t" style="left:355px;top:365px;color:#1a7ae6;font-weight:bold;letter-spacing:0.9px">提示：Z1,Z2都为n的整数倍数，均布可正常配合</div>
<!-- group 类型选择 -->
<div class="grp" style="left:359px;top:395px;width:351px;height:98px"></div>
<div class="lbl t" style="left:366px;top:388px">类型选择</div>
<div class="a" style="left:378px;top:418px;width:13px;height:13px;border-radius:50%;border:1px solid #333;background:#fff"></div>
<div class="t" style="left:396px;top:418px">有太阳轮<span class="m">(NGW</span>单级<span class="m">)</span></div>
<div class="t" style="left:531px;top:417px">行星轮数量<span class="m">n:</span></div>
<div class="cb" style="left:625px;top:417px;width:70px;height:20px"><span class="v">3</span><svg width="9" height="5"><path d="M0.5 0.5L4.5 4.5L8.5 0.5" stroke="#444" fill="none"/></svg></div>
<div class="a" style="left:375px;top:435px;width:29px;height:29px;border-radius:50%;background:#6cb07a"></div>
<div class="a" style="left:378px;top:444px;width:13px;height:13px;border-radius:50%;border:1px solid #2a7a6a;"><div style="position:absolute;left:2px;top:2px;width:7px;height:7px;border-radius:50%;background:#1a6a6a"></div></div>
<div class="t" style="left:396px;top:445px">有太阳轮<span class="m">(NW</span>双极<span class="m">)</span></div>
<svg class="a" style="left:389px;top:448px" width="12" height="19"><path d="M1 1L1 15L4.5 11.5L7 17.5L9 16.5L6.5 10.5L11 10.5Z" fill="#fff" stroke="#000" stroke-width="1"/></svg>
<div class="a" style="left:378px;top:473px;width:13px;height:13px;border-radius:50%;border:1px solid #333;background:#fff"></div>
<div class="t" style="left:396px;top:474px">少齿（无太阳轮）</div>
<div class="t" style="left:362px;top:509px">中&nbsp;&nbsp;&nbsp;&nbsp;心&nbsp;&nbsp;&nbsp;&nbsp;距<span class="m">:&nbsp;&nbsp;&nbsp;&nbsp;&nbsp;A=</span></div>
<div class="t" style="left:494px;top:508px;color:#f00;font-weight:bold;font-size:16px;letter-spacing:1px">85.5</div>
<div class="t" style="left:359px;top:537px">节圆压力角<span class="m">(</span>度<span class="m">) : a=</span></div>
<div class="t" style="left:496px;top:536px;color:#f00;font-weight:bold;font-size:19px">20</div>
<!-- 变位系数 -->
<div class="grp" style="left:73px;top:335px;width:264px;height:58px"></div>
<div class="lbl t" style="left:79px;top:328px">太阳轮变位系数</div>
<div class="t" style="left:241px;top:346px;color:#1010e0;font-weight:bold;font-size:14px">X1=&nbsp;&nbsp;&nbsp;0</div>
<div class="cb" style="left:125px;top:364px;width:38px;height:22px"><span class="v" style="color:#00f;font-weight:bold;top:3px;font-family:'Liberation Sans',sans-serif;font-size:15px;letter-spacing:0">+</span><svg width="9" height="5" style="top:8px"><path d="M0.5 0.5L4.5 4.5L8.5 0.5" stroke="#444" fill="none"/></svg></div>
<div class="t" style="left:175px;top:366px;color:#0000f0;font-weight:bold;font-size:17px">0.</div>
<div class="cb" style="left:199px;top:364px;width:29px;height:22px"><span class="v" style="color:#00f;top:3px;font-family:'Liberation Sans',sans-serif;font-size:12px;left:2px">0</span><svg width="9" height="5" style="top:8px;right:3px"><path d="M0.5 0.5L4.5 4.5L8.5 0.5" stroke="#444" fill="none"/></svg></div>
<div class="cb" style="left:237px;top:364px;width:29px;height:22px"><span class="v" style="color:#00f;top:3px;font-family:'Liberation Sans',sans-serif;font-size:12px;left:2px">0</span><svg width="9" height="5" style="top:8px;right:3px"><path d="M0.5 0.5L4.5 4.5L8.5 0.5" stroke="#444" fill="none"/></svg></div>
<div class="cb" style="left:272px;top:364px;width:34px;height:22px"><span class="v" style="color:#00f;top:3px;font-family:'Liberation Sans',sans-serif;font-size:12px;left:2px">0</span><svg width="9" height="5" style="top:8px"><path d="M0.5 0.5L4.5 4.5L8.5 0.5" stroke="#444" fill="none"/></svg></div>
<div class="grp" style="left:73px;top:407px;width:264px;height:54px"></div>
<div class="lbl t" style="left:79px;top:400px">行星轮变位系数</div>
<div class="t" style="left:241px;top:418px;color:#1010e0;font-weight:bold;font-size:14px">X2=&nbsp;&nbsp;&nbsp;0</div>
<div class="cb" style="left:129px;top:436px;width:38px;height:22px"><span class="v" style="color:#00f;font-weight:bold;top:3px;font-family:'Liberation Sans',sans-serif;font-size:15px;letter-spacing:0">+</span><svg width="9" height="5" style="top:8px"><path d="M0.5 0.5L4.5 4.5L8.5 0.5" stroke="#444" fill="none"/></svg></div>
<div class="t" style="left:177px;top:438px;color:#0000f0;font-weight:bold;font-size:17px">0.</div>
<div class="cb" style="left:201px;top:436px;width:29px;height:22px"><span class="v" style="color:#00f;top:3px;font-family:'Liberation Sans',sans-serif;font-size:12px;left:2px">0</span><svg width="9" height="5" style="top:8px;right:3px"><path d="M0.5 0.5L4.5 4.5L8.5 0.5" stroke="#444" fill="none"/></svg></div>
<div class="cb" style="left:239px;top:436px;width:29px;height:22px"><span class="v" style="color:#00f;top:3px;font-family:'Liberation Sans',sans-serif;font-size:12px;left:2px">0</span><svg width="9" height="5" style="top:8px;right:3px"><path d="M0.5 0.5L4.5 4.5L8.5 0.5" stroke="#444" fill="none"/></svg></div>
<div class="cb" style="left:274px;top:436px;width:34px;height:22px"><span class="v" style="color:#00f;top:3px;font-family:'Liberation Sans',sans-serif;font-size:12px;left:2px">0</span><svg width="9" height="5" style="top:8px"><path d="M0.5 0.5L4.5 4.5L8.5 0.5" stroke="#444" fill="none"/></svg></div>
<div class="t" style="left:72px;top:466px">内齿圈自动计算结果:</div>
<div class="t" style="left:73px;top:487px;color:#1010e6;font-weight:bold;font-size:14px;letter-spacing:2px">齿数:</div>
<div class="t" style="left:159px;top:487px;color:#1010e6;font-weight:bold;font-size:14px">Z4=</div>
<div class="t" style="left:205px;top:487px;color:#f00;font-weight:bold;font-size:14px">75</div>
<div class="t" style="left:73px;top:509px;color:#1010e6;font-weight:bold;font-size:14px;letter-spacing:1.5px">变位系数:</div>
<div class="t" style="left:158px;top:509px;color:#1010e6;font-weight:bold;font-size:14px">x4=</div>
<div class="t" style="left:207px;top:509px;color:#f00;font-weight:bold;font-size:14px">0</div>
</body></html>
